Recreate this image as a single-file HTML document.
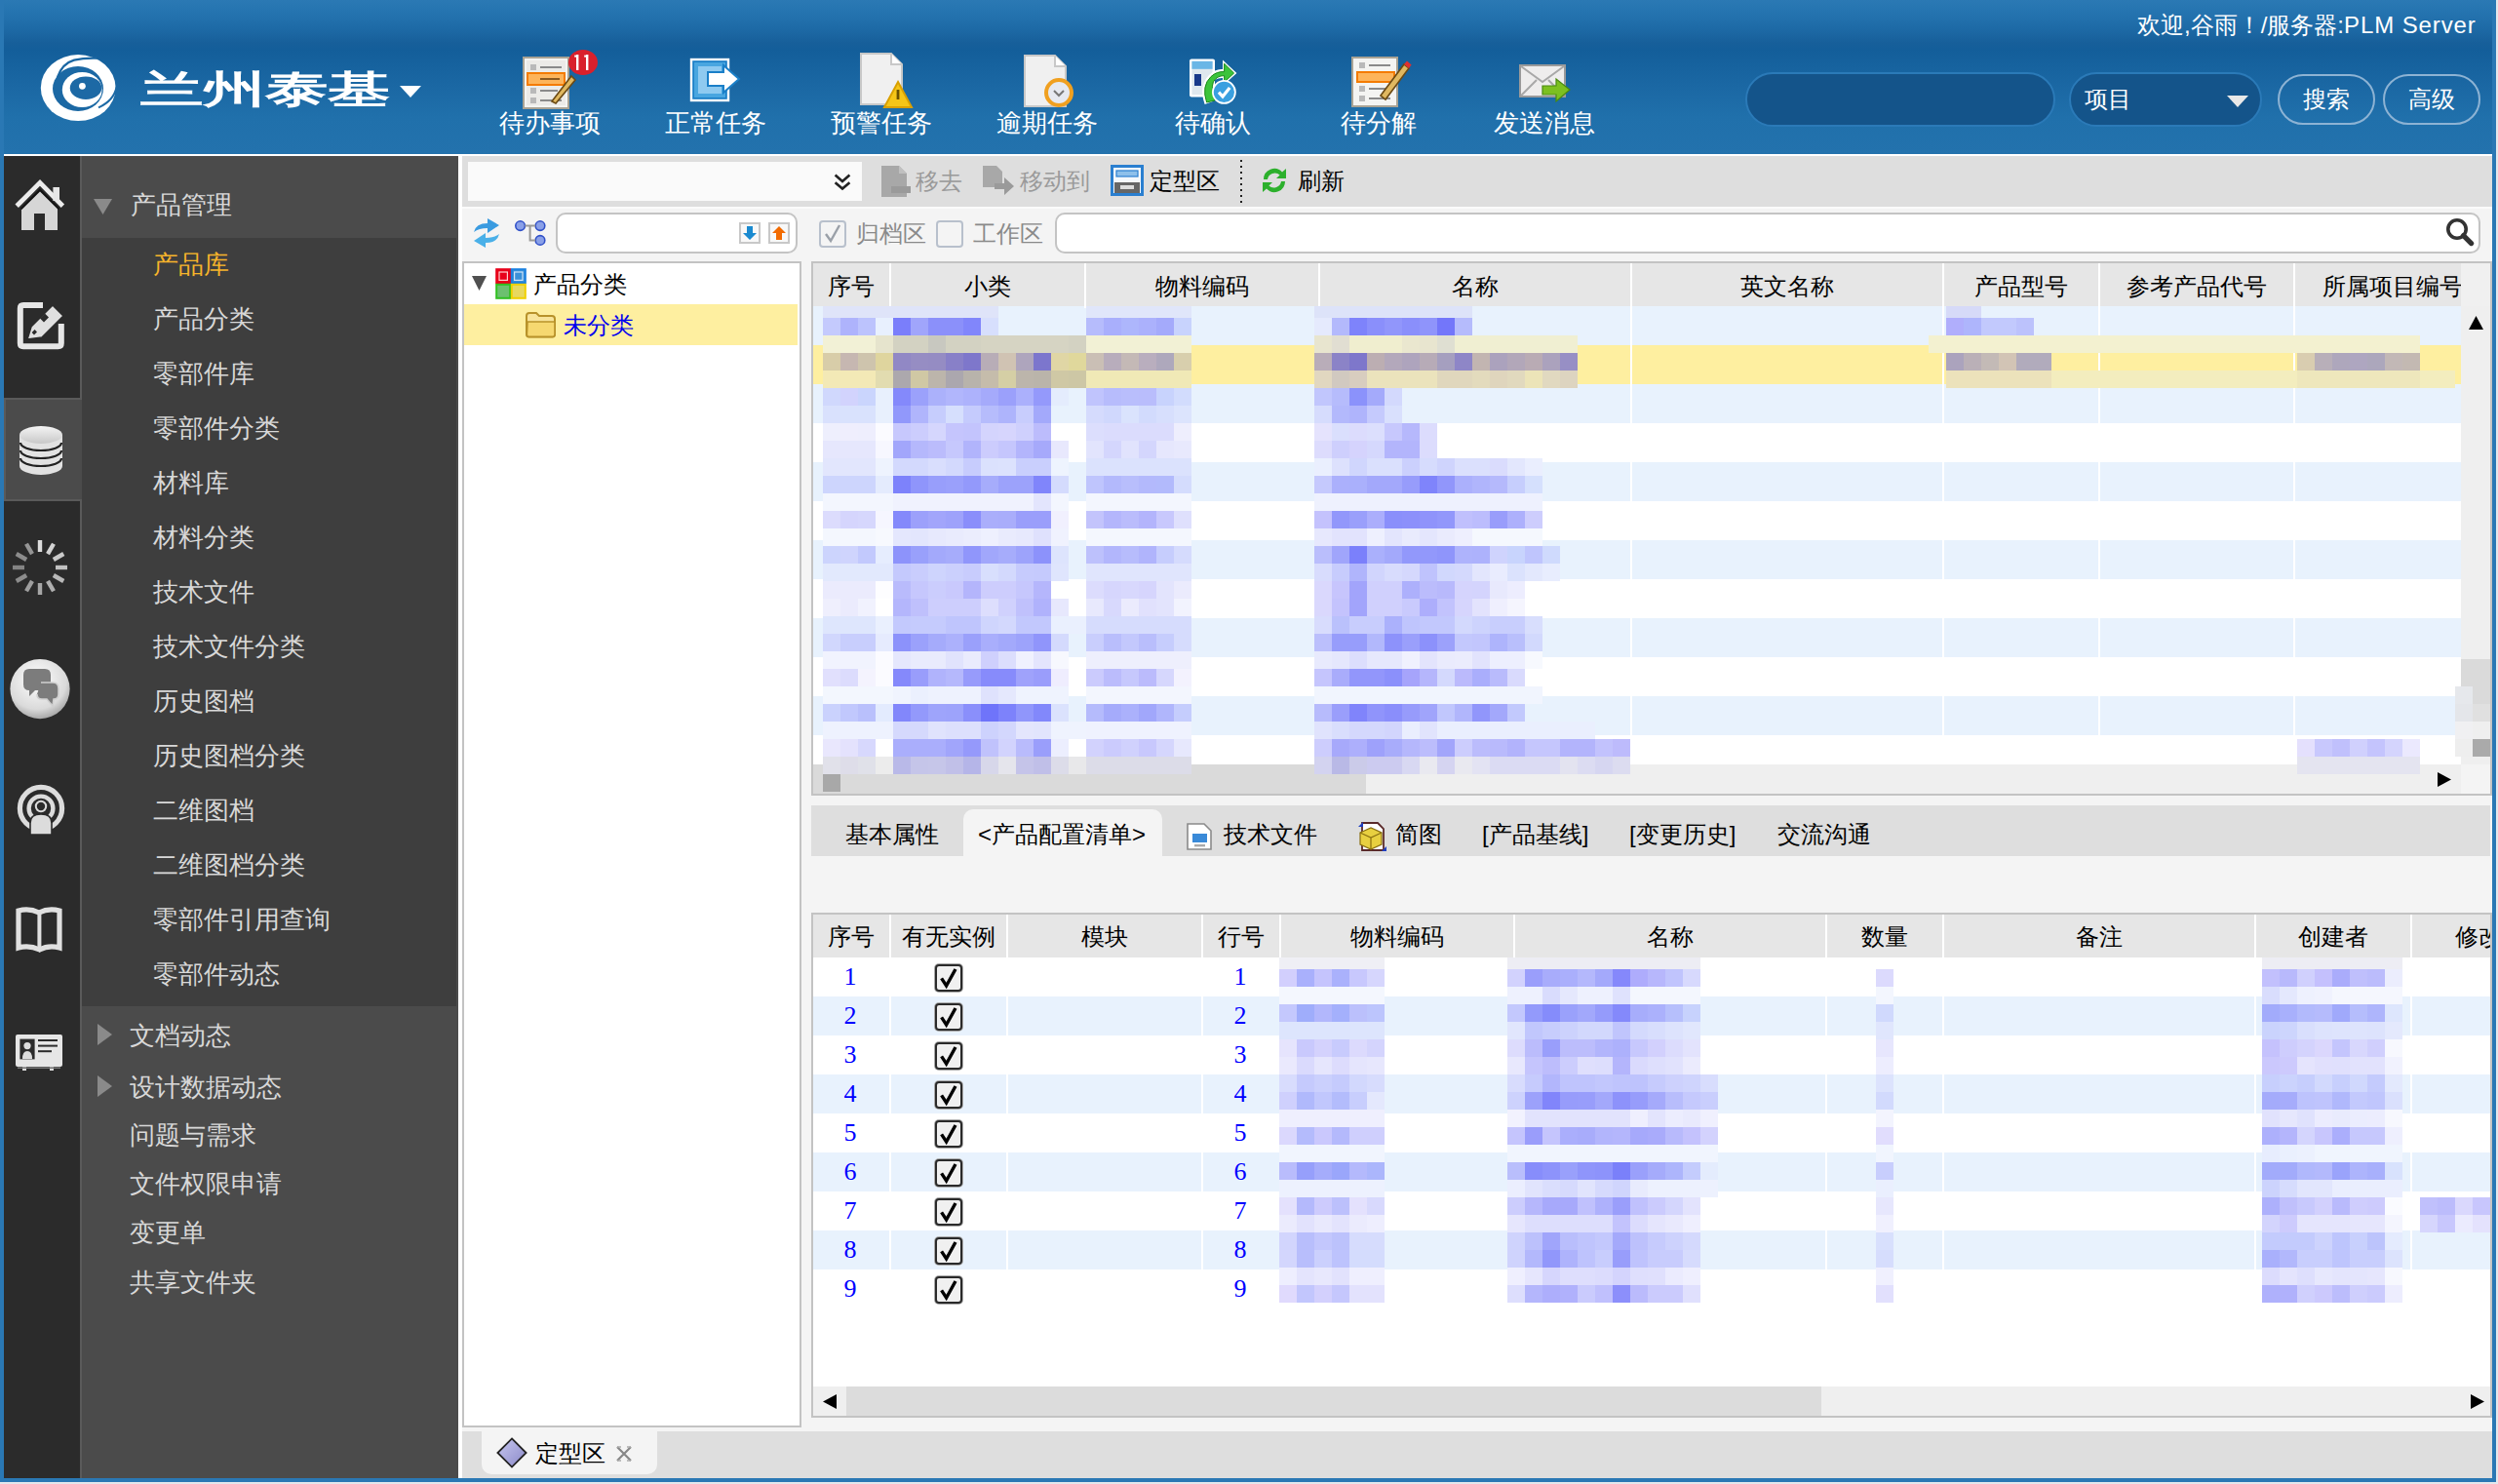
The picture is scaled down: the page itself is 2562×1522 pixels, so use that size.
<!DOCTYPE html>
<html><head><meta charset="utf-8">
<style>
html,body{margin:0;padding:0;width:2562px;height:1522px;overflow:hidden;background:#e8eef4;}
#r{position:absolute;left:0;top:0;width:1281px;height:761px;zoom:2;overflow:hidden;font-family:"Liberation Sans",sans-serif;font-size:12px;color:#000;}
.a{position:absolute;}
.t{position:absolute;white-space:nowrap;line-height:14px;}
.nv{color:#d8d8d8;font-size:13px;line-height:15px;margin-top:-0.5px}
.gy{color:#9a9a9a;}
.num{font-family:"Liberation Serif",serif;font-size:13px;color:#0000ff;line-height:14px;margin-left:-0.5px}
.cb{position:absolute;width:12px;height:12px;border:1px solid #2a2a2a;border-radius:2px;background:#f0f0f0;box-shadow:0 0 0 0.5px #aaa}
.hl{color:#fff;font-size:13px;line-height:15px;margin-top:-0.5px}
</style></head><body>
<div id="r">
<!-- window frame -->
<div class="a" style="left:0;top:0;width:1281px;height:761px;background:#e4e8ec"></div><div class="a" style="left:0;top:0;width:1280px;height:760px;background:#2a78b4"></div>
<!-- header gradient -->
<div class="a" id="hdr" style="left:2px;top:0;width:1276px;height:79px;background:linear-gradient(to bottom,#2b79b4 0px,#2574b0 6px,#1e6ba7 14px,#175f9a 22px,#135e9a 25.5px,#16629e 33px,#1b68a4 45px,#2070ab 60px,#2372ad 79px)"></div>
<!-- HEADER CONTENT -->
<div id="hc">
<!-- logo -->
<svg class="a" style="left:0;top:0" width="70" height="70" viewBox="0 0 70 70">
 <ellipse cx="40.1" cy="45.05" rx="19.2" ry="17" fill="#fff"/>
 <ellipse cx="40" cy="45.5" rx="13" ry="11.5" fill="#1b68a4"/>
 <ellipse cx="42.1" cy="46" rx="10.2" ry="9" fill="#fff"/>
 <ellipse cx="44" cy="45.1" rx="8.1" ry="5.9" fill="#1d69a5"/>
 <circle cx="42.2" cy="44.15" r="1.7" fill="#fff"/>
 <path d="M29.5 39.5 Q32 32.5 38 30.8 Q43 29.6 49.5 29.8" fill="none" stroke="#1a66a2" stroke-width="1.1"/>
 <path d="M59.8 44.5 Q58.5 51.5 50.5 55.2" fill="none" stroke="#1c69a5" stroke-width="1"/>
 <path d="M52 31.5 Q58 33 60.5 37" fill="none" stroke="#1b68a4" stroke-width="0"/>
</svg>
<div class="t" id="logotext" style="left:72px;top:34.5px;color:#fff;font-size:22px;line-height:26px;font-weight:bold;transform-origin:0 0;transform:scale(1.455,0.88);letter-spacing:0px">兰州泰基</div>
<svg class="a" style="left:205px;top:44px" width="11" height="6" viewBox="0 0 11 6"><path d="M0 0H11L5.5 6Z" fill="#fff"/></svg>

<!-- toolbar labels -->
<div class="t hl" style="left:256px;top:56px">待办事项</div>
<div class="t hl" style="left:341px;top:56px">正常任务</div>
<div class="t hl" style="left:426px;top:56px">预警任务</div>
<div class="t hl" style="left:511px;top:56px">逾期任务</div>
<div class="t hl" style="left:602.5px;top:56px">待确认</div>
<div class="t hl" style="left:687.5px;top:56px">待分解</div>
<div class="t hl" style="left:766px;top:56px">发送消息</div>

<!-- icon 1: todo list with badge -->
<svg class="a" style="left:266px;top:24px" width="42" height="34" viewBox="0 0 42 34">
 <rect x="2.5" y="5.5" width="23" height="26" fill="#f4f4f2" stroke="#a9a394"/>
 <rect x="4" y="7" width="20" height="23" fill="#ecebe8"/>
 <g fill="#b9b9b9"><rect x="6" y="9" width="3" height="3"/><rect x="6" y="21" width="3" height="3"/><rect x="6" y="26" width="3" height="3"/></g>
 <g fill="#8a8a8a"><rect x="11" y="10" width="11" height="1"/><rect x="11" y="22" width="9" height="1"/><rect x="11" y="27" width="11" height="1"/></g>
 <rect x="4.5" y="13.5" width="19" height="6" fill="#fdb45a" stroke="#f47b00"/>
 <rect x="11" y="16" width="10" height="1" fill="#8a5a20"/>
 <path d="M17 28 L27 15 L29 17 L19 29 Z" fill="#e0b860" stroke="#6b4a14" stroke-width="0.8"/>
 <ellipse cx="33" cy="8" rx="7.5" ry="6.5" fill="#d9202c"/>
 <g fill="#fff"><rect x="29.5" y="4" width="1.2" height="8"/><rect x="34.5" y="4" width="1.2" height="8"/><rect x="28.6" y="4.3" width="1" height="1"/><rect x="33.6" y="4.3" width="1" height="1"/></g>
</svg>
<!-- icon 2: normal task -->
<svg class="a" style="left:352px;top:28px" width="30" height="26" viewBox="0 0 30 26">
 <rect x="2.5" y="2.5" width="19" height="21" fill="#1a7fc8" stroke="#fff" stroke-width="1.2"/>
 <rect x="4" y="4" width="16" height="18" fill="#49a6e0"/>
 <rect x="6" y="6" width="12" height="14" fill="#8fcaf0"/>
 <path d="M11 9H19V5.5L27 12.5L19 19.5V16H11Z" fill="#fff" stroke="#1a7fc8" stroke-width="1"/>
</svg>
<!-- icon 3: warning doc -->
<svg class="a" style="left:440px;top:26px" width="30" height="30" viewBox="0 0 30 30">
 <path d="M1.5 1.5H17L22.5 7V27.5H1.5Z" fill="#f0f0f0" stroke="#c8c8c8"/>
 <path d="M17 1.5V7H22.5" fill="#ffffff" stroke="#c8c8c8"/>
 <path d="M20.5 16L27.5 29H13.5Z" fill="#f5c518" stroke="#d9a000"/>
 <rect x="19.8" y="20" width="1.4" height="5" fill="#6a5000"/>
</svg>
<!-- icon 4: overdue doc -->
<svg class="a" style="left:524px;top:27px" width="30" height="30" viewBox="0 0 30 30">
 <path d="M1.5 1.5H17L22.5 7V27.5H1.5Z" fill="#f0f0f0" stroke="#c8c8c8"/>
 <path d="M17 1.5V7H22.5" fill="#ffffff" stroke="#c8c8c8"/>
 <circle cx="19" cy="20.5" r="6.5" fill="#e6e9f0" stroke="#f0a020" stroke-width="2"/>
 <path d="M16.5 19.5L19 22L21.5 19.5" fill="none" stroke="#777" stroke-width="1"/>
</svg>
<!-- icon 5: confirm -->
<svg class="a" style="left:600px;top:25px" width="40" height="35" viewBox="600 25 40 35">
 <rect x="610" y="30.2" width="13" height="19.5" rx="1" fill="#fff"/>
 <rect x="611.2" y="31.4" width="10.6" height="17.2" fill="#dfe8ee"/>
 <rect x="611.2" y="31.4" width="10.6" height="4" fill="#6ab6e6"/>
 <rect x="612.5" y="38" width="3.5" height="6" fill="#1a3a8a"/>
 <path d="M617.8 53.5 Q614.5 44 620 38.5 Q623.5 35 627 35.5 L627 30.8 L634.2 37.5 L627 44 L627 40 Q623 39.8 621.2 43 Q619.8 47 622 52 Z" fill="#fff"/>
 <path d="M618.8 52.5 Q616 44 621 39.3 Q624 36.5 627.8 36.8 L627.8 32.6 L632.8 37.5 L627.8 42.2 L627.8 38.8 Q624 38.8 622.2 42 Q620.8 46 623 51.5 Z" fill="#3cc43a" stroke="#1a8a1a" stroke-width="0.5"/>
 <circle cx="627.7" cy="47.2" r="6.2" fill="#fff"/>
 <circle cx="627.7" cy="47.2" r="5.3" fill="#3aa0e0"/>
 <path d="M625 47.3 L627 49.5 L630.6 45" fill="none" stroke="#fff" stroke-width="1.6"/>
</svg>
<!-- icon 6: decompose -->
<svg class="a" style="left:692px;top:28px" width="32" height="28" viewBox="0 0 32 28">
 <rect x="1.5" y="1.5" width="23" height="25" fill="#f4f4f2" stroke="#a9a394"/>
 <g fill="#b9b9b9"><rect x="5" y="4" width="3" height="3"/><rect x="5" y="16" width="3" height="3"/><rect x="5" y="21" width="3" height="3"/></g>
 <g fill="#8a8a8a"><rect x="10" y="5" width="11" height="1"/><rect x="10" y="17" width="9" height="1"/><rect x="10" y="22" width="11" height="1"/></g>
 <rect x="4" y="9" width="19" height="5" fill="#fdb45a" stroke="#f47b00"/>
 <path d="M16 21 L28 5 L30.5 7 L18.5 23 Z" fill="#e0b860" stroke="#6b4a14" stroke-width="0.8"/>
 <path d="M28 5 L29.5 3.2 L31.8 5.2 L30.5 7Z" fill="#e03030"/>
</svg>
<!-- icon 7: send message -->
<svg class="a" style="left:778px;top:32px" width="30" height="24" viewBox="0 0 30 24">
 <rect x="1.5" y="1.5" width="23" height="16" fill="#eeeded" stroke="#9a9a9a"/>
 <path d="M2 2L13 10L24 2M2 17L10 9M24 17L16 9" fill="none" stroke="#a8a8a8" stroke-width="1"/>
 <path d="M13 12H20V8.5L27 14L20 20V16.5H13Z" fill="#7cc020" stroke="#4a8a10" stroke-width="0.6"/>
</svg>

<!-- welcome -->
<div class="t" id="welcome" style="left:1096px;top:5px;color:#fff;font-size:12px;line-height:16px">欢迎,谷雨！/服务器:<span style="letter-spacing:0.45px">PLM Server</span></div>
<!-- search -->
<div class="a" style="left:895px;top:37px;width:157px;height:26px;border:1px solid #2b7ab8;border-radius:14px;background:#14548a"></div>
<div class="a" style="left:1061px;top:37px;width:97px;height:26px;border:1px solid #2b7ab8;border-radius:14px;background:#14548a"></div>
<div class="t" style="left:1069px;top:44px;color:#fff;font-size:12px;line-height:14px">项目</div>
<svg class="a" style="left:1142px;top:49px" width="11" height="6" viewBox="0 0 11 6"><path d="M0 0H11L5.5 6Z" fill="#e8e8e8"/></svg>
<div class="a" style="left:1168px;top:38px;width:48px;height:24px;border:1px solid #8db3d4;border-radius:13px"></div>
<div class="a" style="left:1222px;top:38px;width:48px;height:24px;border:1px solid #8db3d4;border-radius:13px"></div>
<div class="t" style="left:1181px;top:44px;color:#fff;font-size:12px;line-height:14px">搜索</div>
<div class="t" style="left:1235px;top:44px;color:#fff;font-size:12px;line-height:14px">高级</div>
</div>
<div class="a" style="left:2px;top:79px;width:1276px;height:1px;background:#fff"></div>

<!-- icon column -->
<div class="a" style="left:2px;top:80px;width:39px;height:678px;background:#2b2b2b"></div>
<div class="a" style="left:41px;top:80px;width:1px;height:678px;background:#5a5a5a"></div>
<!-- nav panel -->
<div class="a" style="left:42px;top:80px;width:193px;height:678px;background:#4b4b4b"></div>
<div class="a" style="left:42px;top:122px;width:192px;height:394px;background:#3e3e3e"></div>
<div class="a" style="left:235px;top:80px;width:2px;height:678px;background:#fff"></div>

<!-- NAV -->
<svg class="a" style="left:48px;top:102px" width="10" height="8" viewBox="0 0 10 8"><path d="M0 0H9.5L4.75 8Z" fill="#8a8a8a"/></svg>
<div class="t nv" style="left:67px;top:98px">产品管理</div>
<div class="t nv" style="left:78.5px;top:128.5px;color:#f6b42b">产品库</div>
<div class="t nv" style="left:78.5px;top:156.5px;color:#d8d8d8">产品分类</div>
<div class="t nv" style="left:78.5px;top:184.5px;color:#d8d8d8">零部件库</div>
<div class="t nv" style="left:78.5px;top:212.5px;color:#d8d8d8">零部件分类</div>
<div class="t nv" style="left:78.5px;top:240.5px;color:#d8d8d8">材料库</div>
<div class="t nv" style="left:78.5px;top:268.5px;color:#d8d8d8">材料分类</div>
<div class="t nv" style="left:78.5px;top:296.5px;color:#d8d8d8">技术文件</div>
<div class="t nv" style="left:78.5px;top:324.5px;color:#d8d8d8">技术文件分类</div>
<div class="t nv" style="left:78.5px;top:352.5px;color:#d8d8d8">历史图档</div>
<div class="t nv" style="left:78.5px;top:380.5px;color:#d8d8d8">历史图档分类</div>
<div class="t nv" style="left:78.5px;top:408.5px;color:#d8d8d8">二维图档</div>
<div class="t nv" style="left:78.5px;top:436.5px;color:#d8d8d8">二维图档分类</div>
<div class="t nv" style="left:78.5px;top:464.5px;color:#d8d8d8">零部件引用查询</div>
<div class="t nv" style="left:78.5px;top:492.5px;color:#d8d8d8">零部件动态</div>
<svg class="a" style="left:50px;top:525px" width="8" height="11" viewBox="0 0 8 11"><path d="M0 0V11L7.5 5.5Z" fill="#8a8a8a"/></svg>
<div class="t nv" style="left:66.5px;top:524px">文档动态</div>
<svg class="a" style="left:50px;top:551.5px" width="8" height="11" viewBox="0 0 8 11"><path d="M0 0V11L7.5 5.5Z" fill="#8a8a8a"/></svg>
<div class="t nv" style="left:66.5px;top:550.5px">设计数据动态</div>
<div class="t nv" style="left:66.5px;top:575px">问题与需求</div>
<div class="t nv" style="left:66.5px;top:600px">文件权限申请</div>
<div class="t nv" style="left:66.5px;top:625px">变更单</div>
<div class="t nv" style="left:66.5px;top:650.5px">共享文件夹</div>
<div class="a" style="left:2px;top:204px;width:39px;height:51px;border:1px solid #5a5a5a;border-right:none;background:#4b4b4b"></div>
<div class="a" style="left:41px;top:205px;width:1px;height:51px;background:#4b4b4b"></div>
<svg class="a" style="left:0;top:80px" width="41" height="480" viewBox="0 80 41 480">
<defs>
 <linearGradient id="lg" x1="0" y1="0" x2="0" y2="1"><stop offset="0" stop-color="#f4f4f4"/><stop offset="1" stop-color="#c8c8c8"/></linearGradient>
 <radialGradient id="rg" cx="0.45" cy="0.35" r="0.7"><stop offset="0" stop-color="#ffffff"/><stop offset="0.7" stop-color="#dadada"/><stop offset="1" stop-color="#9a9a9a"/></radialGradient>
</defs>
<!-- home -->
<path d="M11 107 L20.5 97.5 L29.5 106.5 V118 H23 V109.5 H17.5 V118 H11 Z" fill="#d6d6d6"/>
<polyline points="8.6,105.6 20.5,93.7 32.2,105.6" fill="none" stroke="#ececec" stroke-width="2.4"/>
<polyline points="10.8,107.2 20.5,97.5 30.2,107.2" fill="none" stroke="#111" stroke-width="1"/>
<rect x="27.2" y="96" width="3.3" height="7" fill="#e6e6e6"/>
<!-- edit -->
<path d="M22 156.5 H12 Q10.4 156.5 10.4 158.1 V176 Q10.4 177.6 12 177.6 H29.8 Q31.4 177.6 31.4 176 V166" fill="none" stroke="#e6e6e6" stroke-width="3"/>
<path d="M14 174 L16 167.5 L27 156.5 L32.5 162 L21.5 173 Z" fill="#e0e0e0" stroke="#2b2b2b" stroke-width="0.8"/>
<path d="M20.5 163.2 L23 160.7 L25 162.7 L22.5 165.2Z" fill="#2b2b2b"/>
<path d="M16.3 170.5 L17.8 169 L19 170.2 L17.5 171.7Z" fill="#2b2b2b"/>
<!-- db -->
<path d="M10 223 V239 A11 4.5 0 0 0 32 239 V223 Z" fill="#e2e2e2"/>
<ellipse cx="21" cy="223" rx="11" ry="4.5" fill="url(#lg)"/>
<path d="M10.5 227 A10.5 4 0 0 0 31.5 227" fill="none" stroke="#222" stroke-width="1.1"/>
<path d="M10.5 231 A10.5 4 0 0 0 31.5 231" fill="none" stroke="#222" stroke-width="1.1"/>
<path d="M10.5 235 A10.5 4 0 0 0 31.5 235" fill="none" stroke="#222" stroke-width="1.1"/>
<!-- spinner -->
<line x1="20.50" y1="283.00" x2="20.50" y2="277.00" stroke="#dcdcdc" stroke-opacity="1" stroke-width="2.2"/><line x1="24.50" y1="284.07" x2="27.50" y2="278.88" stroke="#dcdcdc" stroke-opacity="0.95" stroke-width="2.2"/><line x1="27.43" y1="287.00" x2="32.62" y2="284.00" stroke="#dcdcdc" stroke-opacity="0.9" stroke-width="2.2"/><line x1="28.50" y1="291.00" x2="34.50" y2="291.00" stroke="#dcdcdc" stroke-opacity="0.85" stroke-width="2.2"/><line x1="27.43" y1="295.00" x2="32.62" y2="298.00" stroke="#dcdcdc" stroke-opacity="0.8" stroke-width="2.2"/><line x1="24.50" y1="297.93" x2="27.50" y2="303.12" stroke="#dcdcdc" stroke-opacity="0.75" stroke-width="2.2"/><line x1="20.50" y1="299.00" x2="20.50" y2="305.00" stroke="#dcdcdc" stroke-opacity="0.7" stroke-width="2.2"/><line x1="16.50" y1="297.93" x2="13.50" y2="303.12" stroke="#dcdcdc" stroke-opacity="0.65" stroke-width="2.2"/><line x1="13.57" y1="295.00" x2="8.38" y2="298.00" stroke="#dcdcdc" stroke-opacity="0.55" stroke-width="2.2"/><line x1="12.50" y1="291.00" x2="6.50" y2="291.00" stroke="#dcdcdc" stroke-opacity="0.5" stroke-width="2.2"/><line x1="13.57" y1="287.00" x2="8.38" y2="284.00" stroke="#dcdcdc" stroke-opacity="0.55" stroke-width="2.2"/><line x1="16.50" y1="284.07" x2="13.50" y2="278.88" stroke="#dcdcdc" stroke-opacity="0.6" stroke-width="2.2"/>
<!-- chat -->
<circle cx="20.5" cy="353.3" r="15.3" fill="url(#rg)"/>
<path d="M12 346 Q12 343 15 343 H23 Q26 343 26 346 V351 Q26 354 23 354 H18 L15 357 V354 Q12 354 12 351Z" fill="#7c7c7c"/>
<path d="M21 350 H27 Q30 350 30 353 V356 Q30 358.5 27.5 358.5 L27 362 L24 358.5 H21.5 Q19 358.5 19 356" fill="#7c7c7c" stroke="#cfcfcf" stroke-width="0.8"/>
<!-- radio -->
<circle cx="21" cy="414.5" r="10.8" fill="none" stroke="#dcdcdc" stroke-width="2.6"/>
<circle cx="21" cy="414.5" r="6.2" fill="none" stroke="#dcdcdc" stroke-width="2.2"/>
<circle cx="21" cy="413.5" r="2.6" fill="#2b2b2b" stroke="#dcdcdc" stroke-width="1"/>
<path d="M15.5 428 V422 Q15.5 417.5 21 417.5 Q26.5 417.5 26.5 422 V428Z" fill="#dcdcdc" stroke="#2b2b2b" stroke-width="0.8"/>
<!-- book -->
<path d="M9.5 467 Q15 465.5 20 468 Q25 465.5 30.5 467 V486 Q25 484.5 20.3 487 Q15 484.5 9.5 486 Z" fill="none" stroke="#e0e0e0" stroke-width="2.6"/>
<line x1="20.2" y1="468" x2="20.2" y2="487" stroke="#e0e0e0" stroke-width="2"/>
<!-- id card -->
<rect x="8" y="530.5" width="24" height="16.5" rx="1" fill="#e6e6e6"/>
<rect x="10.2" y="532.8" width="7.6" height="10.4" fill="#2b2b2b"/>
<circle cx="14" cy="536.3" r="1.8" fill="#dcdcdc"/>
<path d="M11.5 543 Q11.5 539 14 539 Q16.5 539 16.5 543Z" fill="#dcdcdc"/>
<g fill="#2b2b2b"><rect x="19.5" y="533" width="10" height="1"/><rect x="19.5" y="535.8" width="10" height="1"/><rect x="19.5" y="538.6" width="7" height="1"/></g>
<g fill="#dcdcdc"><rect x="11.5" y="547" width="2" height="2"/><rect x="25.5" y="547" width="2" height="2"/><rect x="9" y="547.2" width="22" height="0.8" fill="#777"/></g>
</svg>
<!-- content -->
<div class="a" id="content" style="left:237px;top:80px;width:1041px;height:678px;background:#f4f4f4"></div>
<div class="a" style="left:237px;top:80px;width:1041px;height:26px;background:#dedede"></div>
<div class="a" style="left:237px;top:106px;width:1041px;height:1px;background:#fbfbfb"></div>
<div class="a" style="left:240px;top:83px;width:202px;height:20px;background:#fafafa"></div>
<svg class="a" style="left:427.5px;top:89px" width="9" height="9" viewBox="0 0 9 9"><path d="M0.8 0.8L4.5 4L8.2 0.8M0.8 4.6L4.5 7.8L8.2 4.6" fill="none" stroke="#222" stroke-width="1.3"/></svg>
<svg class="a" style="left:451px;top:84px" width="17" height="18" viewBox="0 0 17 18"><path d="M1 1H10L14 5V17H1Z" fill="#a8a8a8"/><path d="M10 1V5H14" fill="#c0c0c0"/><rect x="6" y="11.5" width="10" height="3.5" fill="#9a9a9a"/></svg>
<div class="t gy" style="left:469.5px;top:86px">移去</div>
<svg class="a" style="left:503px;top:84px" width="18" height="18" viewBox="0 0 18 18"><path d="M1 1H8L11 4V12H1Z" fill="#a8a8a8"/><path d="M7 10H12V7L17 11.5L12 16V13H7Z" fill="#9a9a9a"/></svg>
<div class="t gy" style="left:523px;top:86px">移动到</div>
<svg class="a" style="left:569.5px;top:84.5px" width="17" height="16" viewBox="0 0 17 16"><rect x="0.75" y="0.75" width="15.5" height="14.5" fill="#f4f8fc" stroke="#2a7fd0" stroke-width="1.5"/><rect x="3" y="3" width="11" height="3" fill="#8ec0ea" stroke="#2a7fd0" stroke-width="0.6"/><rect x="2" y="9" width="13" height="5.5" fill="#666"/><rect x="5" y="10.5" width="7" height="2" fill="#ddd"/></svg>
<div class="t" style="left:589.5px;top:86px">定型区</div>
<div class="a" style="left:636px;top:82px;width:1px;height:22px;background:repeating-linear-gradient(to bottom,#222 0 1px,transparent 1px 3px)"></div>
<svg class="a" style="left:646px;top:85px" width="15" height="15" viewBox="0 0 15 15"><path d="M2 7 A5.5 5.5 0 0 1 11.5 3.2 L13.5 1.5 V6.5 H8.5 L10.3 4.7 A3.8 3.8 0 0 0 4 7Z" fill="#2cb02c"/><path d="M13 8 A5.5 5.5 0 0 1 3.5 11.8 L1.5 13.5 V8.5 H6.5 L4.7 10.3 A3.8 3.8 0 0 0 11 8Z" fill="#2cb02c"/></svg>
<div class="t" style="left:665.5px;top:86px">刷新</div>
<svg class="a" style="left:241px;top:111px" width="17" height="17" viewBox="0 0 17 17"><path d="M2 8 Q3 3.5 9 3.5 V1 L15 4.5 L9 8.5 V6 Q4.5 6 2 8Z" fill="#3a9be0"/><path d="M15 9 Q14 13.5 8 13.5 V16 L2 12.5 L8 8.5 V11 Q12.5 11 15 9Z" fill="#4ab0e8"/></svg>
<svg class="a" style="left:264px;top:113px" width="17" height="14" viewBox="0 0 17 14"><circle cx="2.8" cy="2.8" r="2.4" fill="#8aa0e8" stroke="#3050c8" stroke-width="0.8"/><circle cx="13" cy="2.8" r="2.4" fill="#8aa0e8" stroke="#3050c8" stroke-width="0.8"/><circle cx="13" cy="10.2" r="2.4" fill="#8aa0e8" stroke="#3050c8" stroke-width="0.8"/><path d="M5.2 2.8H10.6M7.8 2.8V10.2H10.6" fill="none" stroke="#999" stroke-width="1"/></svg>
<div class="a" style="left:285px;top:109px;width:122px;height:19px;border:1px solid #c4c4c4;border-radius:5px;background:#fff"></div>
<div class="a" style="left:379px;top:114px;width:9px;height:9px;border:1px solid #c8c8c8;background:#f8f8f8"></div>
<svg class="a" style="left:380px;top:115px" width="9" height="9" viewBox="0 0 9 9"><path d="M3 1H6V4.5H8L4.5 8L1 4.5H3Z" fill="#1a8ad0"/></svg>
<div class="a" style="left:394px;top:114px;width:9px;height:9px;border:1px solid #c8c8c8;background:#f8f8f8"></div>
<svg class="a" style="left:395px;top:115px" width="9" height="9" viewBox="0 0 9 9"><path d="M3 8H6V4.5H8L4.5 1L1 4.5H3Z" fill="#f26a00"/></svg>
<div class="a" style="left:420px;top:113px;width:12px;height:12px;border:1px solid #b8c0cc;border-radius:2px;background:#f4f4f4"></div>
<svg class="a" style="left:421px;top:114px" width="12" height="12" viewBox="0 0 12 12"><path d="M2.5 6L5 9.5L9.5 1.5" fill="none" stroke="#9aa0a8" stroke-width="1.2"/></svg>
<div class="t gy" style="left:439px;top:113px;color:#8a8a8a">归档区</div>
<div class="a" style="left:480px;top:113px;width:12px;height:12px;border:1px solid #b8c0cc;border-radius:2px;background:#f4f4f4"></div>
<div class="t gy" style="left:499px;top:113px;color:#8a8a8a">工作区</div>
<div class="a" style="left:541px;top:109px;width:729px;height:19px;border:1px solid #c4c4c4;border-radius:5px;background:#fff"></div>
<svg class="a" style="left:1254px;top:111.5px" width="15" height="15" viewBox="0 0 15 15"><circle cx="6" cy="6" r="4.6" fill="#fff" stroke="#333" stroke-width="1.8"/><path d="M9.3 9.3L13.3 13.3" stroke="#333" stroke-width="2.6" stroke-linecap="round"/></svg>
<div class="a" style="left:237px;top:134px;width:172px;height:596px;border:1px solid #c3c3c3;background:#fff"></div>
<svg class="a" style="left:242px;top:141.5px" width="8" height="8" viewBox="0 0 8 8"><path d="M0 0H7.5L3.75 7.5Z" fill="#505050"/></svg>
<svg class="a" style="left:254px;top:137.5px" width="16" height="16" viewBox="0 0 16 16"><rect x="0.6" y="0.6" width="7" height="7" fill="#e8001a" stroke="#e8001a"/><rect x="2" y="2" width="4.2" height="4.2" fill="#e8001a" stroke="#ffd0d0" stroke-width="0.6"/><rect x="8.4" y="0.6" width="7" height="7" fill="#3a90d8" stroke="#1a80e0"/><rect x="9.8" y="2" width="4.2" height="4.2" fill="#3a90d8" stroke="#d0e4f8" stroke-width="0.6"/><rect x="0.6" y="8.4" width="7" height="7" fill="#6cc070" stroke="#30c020"/><rect x="8.4" y="8.4" width="7" height="7" fill="#e8d860" stroke="#f0d000"/></svg>
<div class="t" style="left:273.5px;top:139px">产品分类</div>
<div class="a" style="left:238px;top:156px;width:171px;height:21px;background:#feefa0"></div>
<svg class="a" style="left:269px;top:159.5px" width="17" height="14" viewBox="0 0 17 14"><path d="M1 2.5Q1 1 2.5 1H6L7.5 2.5H14Q15.5 2.5 15.5 4V12Q15.5 13.2 14.3 13.2H2.2Q1 13.2 1 12Z" fill="#f8e49a" stroke="#b8922a" stroke-width="1"/><path d="M1.5 5.5H15.5V12Q15.5 13.2 14.3 13.2H2.2Q1.2 13.2 1.2 12Z" fill="#f6d870" stroke="#b8922a" stroke-width="0.8"/></svg>
<div class="t" style="left:289px;top:160px;color:#0000ee">未分类</div>
<div class="a" style="left:416px;top:134px;width:860px;height:272px;border:1px solid #c3c3c3;background:#fff"></div>
<div class="a" style="left:417px;top:135px;width:845px;height:22px;background:#e6e6e6"></div>
<div class="a" style="left:1262px;top:135px;width:15px;height:22px;background:#f0f0f0"></div>
<div class="a" style="left:417px;top:157px;width:845px;height:20px;background:#e8f2fd"></div>
<div class="a" style="left:417px;top:177px;width:845px;height:20px;background:#feefa0"></div>
<div class="a" style="left:417px;top:197px;width:845px;height:20px;background:#e8f2fd"></div>
<div class="a" style="left:417px;top:217px;width:845px;height:20px;background:#ffffff"></div>
<div class="a" style="left:417px;top:237px;width:845px;height:20px;background:#e8f2fd"></div>
<div class="a" style="left:417px;top:257px;width:845px;height:20px;background:#ffffff"></div>
<div class="a" style="left:417px;top:277px;width:845px;height:20px;background:#e8f2fd"></div>
<div class="a" style="left:417px;top:297px;width:845px;height:20px;background:#ffffff"></div>
<div class="a" style="left:417px;top:317px;width:845px;height:20px;background:#e8f2fd"></div>
<div class="a" style="left:417px;top:337px;width:845px;height:20px;background:#ffffff"></div>
<div class="a" style="left:417px;top:357px;width:845px;height:20px;background:#e8f2fd"></div>
<div class="a" style="left:417px;top:377px;width:845px;height:15px;background:#ffffff"></div>
<div class="a" style="left:456px;top:135px;width:1px;height:23px;background:#fff"></div>
<div class="a" style="left:556px;top:135px;width:1px;height:23px;background:#fff"></div>
<div class="a" style="left:676px;top:135px;width:1px;height:23px;background:#fff"></div>
<div class="a" style="left:836px;top:135px;width:1px;height:257px;background:#fff"></div>
<div class="a" style="left:996px;top:135px;width:1px;height:257px;background:#fff"></div>
<div class="a" style="left:1076px;top:135px;width:1px;height:257px;background:#fff"></div>
<div class="a" style="left:1176px;top:135px;width:1px;height:257px;background:#fff"></div>
<div class="a" style="left:417px;top:135px;width:845px;height:22px;overflow:hidden">
<div class="t" style="left:0px;width:39px;top:5px;text-align:center">序号</div>
<div class="t" style="left:40px;width:99px;top:5px;text-align:center">小类</div>
<div class="t" style="left:140px;width:119px;top:5px;text-align:center">物料编码</div>
<div class="t" style="left:260px;width:159px;top:5px;text-align:center">名称</div>
<div class="t" style="left:420px;width:159px;top:5px;text-align:center">英文名称</div>
<div class="t" style="left:580px;width:79px;top:5px;text-align:center">产品型号</div>
<div class="t" style="left:660px;width:99px;top:5px;text-align:center">参考产品代号</div>
<div class="t" style="left:760px;width:100px;top:5px;text-align:center">所属项目编号</div>
</div>
<!-- MOSAIC1 -->
<div class="a" style="left:1262px;top:157px;width:15px;height:235px;background:#efefef"></div>
<div class="a" style="left:1262px;top:338px;width:15px;height:50px;background:#dadada"></div>
<svg class="a" style="left:1266px;top:162px" width="8" height="7" viewBox="0 0 8 7"><path d="M0 7H7.5L3.75 0Z" fill="#000"/></svg>
<div class="a" style="left:417px;top:392px;width:845px;height:15px;background:#efefef"></div>
<div class="a" style="left:417px;top:392px;width:283.5px;height:15px;background:#dadada"></div>
<div class="a" style="left:1262px;top:392px;width:15px;height:15px;background:#f4f4f4"></div>
<svg class="a" style="left:1250px;top:396px" width="7" height="8" viewBox="0 0 7 8"><path d="M0 0V7.5L7 3.75Z" fill="#000"/></svg>
<div class="a" style="left:416px;top:413px;width:861px;height:26px;background:#dedede"></div>
<div class="a" style="left:494px;top:415px;width:102px;height:24px;background:#f4f4f4;border-radius:5px 5px 0 0"></div>
<div class="t" style="left:433.5px;top:421px">基本属性</div>
<div class="t" style="left:501.5px;top:421px">&lt;产品配置清单&gt;</div>
<svg class="a" style="left:608px;top:421.5px" width="15" height="15" viewBox="0 0 15 15"><path d="M1 1H9.5L13 4.5V14H1Z" fill="#fff" stroke="#8a8a8a" stroke-width="0.8"/><rect x="3.5" y="6" width="7.5" height="4.5" fill="#3a8ad8"/><rect x="4.5" y="11.5" width="5.5" height="1.2" fill="#aaa"/></svg>
<div class="t" style="left:627.5px;top:421px">技术文件</div>
<svg class="a" style="left:695.5px;top:421px" width="17" height="16" viewBox="0 0 17 16"><path d="M3 1H11L14 4V15H3Z" fill="#fff" stroke="#5a2a2a" stroke-width="0.9"/><path d="M2 6L7.5 3.5L13 6V12L7.5 14.5L2 12Z" fill="#e8d040" stroke="#8a7010" stroke-width="0.6"/><path d="M2 6L7.5 8.5L13 6M7.5 8.5V14.5" fill="none" stroke="#8a7010" stroke-width="0.6"/><path d="M1 3L3.5 0.5V3Z" fill="#2040c0"/><path d="M13 15.5L15.5 13V15.5Z" fill="#2040c0"/></svg>
<div class="t" style="left:715.5px;top:421px">简图</div>
<div class="t" style="left:760px;top:421px">[产品基线]</div>
<div class="t" style="left:835.5px;top:421px">[变更历史]</div>
<div class="t" style="left:911.5px;top:421px">交流沟通</div>
<div class="a" style="left:416px;top:468px;width:860px;height:257px;border:1px solid #c3c3c3;background:#fff"></div>
<div class="a" style="left:417px;top:469px;width:860px;height:22px;background:#e6e6e6"></div>
<div class="a" style="left:417px;top:511px;width:860px;height:20px;background:#e8f2fd"></div>
<div class="a" style="left:417px;top:551px;width:860px;height:20px;background:#e8f2fd"></div>
<div class="a" style="left:417px;top:591px;width:860px;height:20px;background:#e8f2fd"></div>
<div class="a" style="left:417px;top:631px;width:860px;height:20px;background:#e8f2fd"></div>
<div class="a" style="left:456px;top:469px;width:1px;height:202px;background:#fff"></div>
<div class="a" style="left:516px;top:469px;width:1px;height:202px;background:#fff"></div>
<div class="a" style="left:616px;top:469px;width:1px;height:202px;background:#fff"></div>
<div class="a" style="left:656px;top:469px;width:1px;height:202px;background:#fff"></div>
<div class="a" style="left:776px;top:469px;width:1px;height:202px;background:#fff"></div>
<div class="a" style="left:936px;top:469px;width:1px;height:202px;background:#fff"></div>
<div class="a" style="left:996px;top:469px;width:1px;height:202px;background:#fff"></div>
<div class="a" style="left:1156px;top:469px;width:1px;height:202px;background:#fff"></div>
<div class="a" style="left:1236px;top:469px;width:1px;height:202px;background:#fff"></div>
<div class="a" style="left:417px;top:468.5px;width:860px;height:22.5px;overflow:hidden">
<div class="t" style="left:0px;width:39px;top:5px;text-align:center">序号</div>
<div class="t" style="left:40px;width:59px;top:5px;text-align:center">有无实例</div>
<div class="t" style="left:100px;width:99px;top:5px;text-align:center">模块</div>
<div class="t" style="left:200px;width:39px;top:5px;text-align:center">行号</div>
<div class="t" style="left:240px;width:119px;top:5px;text-align:center">物料编码</div>
<div class="t" style="left:360px;width:159px;top:5px;text-align:center">名称</div>
<div class="t" style="left:520px;width:59px;top:5px;text-align:center">数量</div>
<div class="t" style="left:580px;width:159px;top:5px;text-align:center">备注</div>
<div class="t" style="left:740px;width:79px;top:5px;text-align:center">创建者</div>
<div class="t" style="left:820px;width:80px;top:5px;text-align:center">修改者</div>
</div>
<div class="t num" style="left:417px;width:39px;top:494px;text-align:center">1</div>
<div class="t num" style="left:617px;width:39px;top:494px;text-align:center">1</div>
<div class="cb" style="left:479.5px;top:494.5px"><svg width="14" height="14" viewBox="0 0 14 14" style="position:absolute;left:-1px;top:-1px"><path d="M3.3 7.2L5.8 11L10.5 2.5" fill="none" stroke="#000" stroke-width="1.7"/></svg></div>
<div class="t num" style="left:417px;width:39px;top:514px;text-align:center">2</div>
<div class="t num" style="left:617px;width:39px;top:514px;text-align:center">2</div>
<div class="cb" style="left:479.5px;top:514.5px"><svg width="14" height="14" viewBox="0 0 14 14" style="position:absolute;left:-1px;top:-1px"><path d="M3.3 7.2L5.8 11L10.5 2.5" fill="none" stroke="#000" stroke-width="1.7"/></svg></div>
<div class="t num" style="left:417px;width:39px;top:534px;text-align:center">3</div>
<div class="t num" style="left:617px;width:39px;top:534px;text-align:center">3</div>
<div class="cb" style="left:479.5px;top:534.5px"><svg width="14" height="14" viewBox="0 0 14 14" style="position:absolute;left:-1px;top:-1px"><path d="M3.3 7.2L5.8 11L10.5 2.5" fill="none" stroke="#000" stroke-width="1.7"/></svg></div>
<div class="t num" style="left:417px;width:39px;top:554px;text-align:center">4</div>
<div class="t num" style="left:617px;width:39px;top:554px;text-align:center">4</div>
<div class="cb" style="left:479.5px;top:554.5px"><svg width="14" height="14" viewBox="0 0 14 14" style="position:absolute;left:-1px;top:-1px"><path d="M3.3 7.2L5.8 11L10.5 2.5" fill="none" stroke="#000" stroke-width="1.7"/></svg></div>
<div class="t num" style="left:417px;width:39px;top:574px;text-align:center">5</div>
<div class="t num" style="left:617px;width:39px;top:574px;text-align:center">5</div>
<div class="cb" style="left:479.5px;top:574.5px"><svg width="14" height="14" viewBox="0 0 14 14" style="position:absolute;left:-1px;top:-1px"><path d="M3.3 7.2L5.8 11L10.5 2.5" fill="none" stroke="#000" stroke-width="1.7"/></svg></div>
<div class="t num" style="left:417px;width:39px;top:594px;text-align:center">6</div>
<div class="t num" style="left:617px;width:39px;top:594px;text-align:center">6</div>
<div class="cb" style="left:479.5px;top:594.5px"><svg width="14" height="14" viewBox="0 0 14 14" style="position:absolute;left:-1px;top:-1px"><path d="M3.3 7.2L5.8 11L10.5 2.5" fill="none" stroke="#000" stroke-width="1.7"/></svg></div>
<div class="t num" style="left:417px;width:39px;top:614px;text-align:center">7</div>
<div class="t num" style="left:617px;width:39px;top:614px;text-align:center">7</div>
<div class="cb" style="left:479.5px;top:614.5px"><svg width="14" height="14" viewBox="0 0 14 14" style="position:absolute;left:-1px;top:-1px"><path d="M3.3 7.2L5.8 11L10.5 2.5" fill="none" stroke="#000" stroke-width="1.7"/></svg></div>
<div class="t num" style="left:417px;width:39px;top:634px;text-align:center">8</div>
<div class="t num" style="left:617px;width:39px;top:634px;text-align:center">8</div>
<div class="cb" style="left:479.5px;top:634.5px"><svg width="14" height="14" viewBox="0 0 14 14" style="position:absolute;left:-1px;top:-1px"><path d="M3.3 7.2L5.8 11L10.5 2.5" fill="none" stroke="#000" stroke-width="1.7"/></svg></div>
<div class="t num" style="left:417px;width:39px;top:654px;text-align:center">9</div>
<div class="t num" style="left:617px;width:39px;top:654px;text-align:center">9</div>
<div class="cb" style="left:479.5px;top:654.5px"><svg width="14" height="14" viewBox="0 0 14 14" style="position:absolute;left:-1px;top:-1px"><path d="M3.3 7.2L5.8 11L10.5 2.5" fill="none" stroke="#000" stroke-width="1.7"/></svg></div>
<!-- MOSAIC2 -->
<div class="a" style="left:417px;top:711px;width:860px;height:15px;background:#efefef"></div>
<div class="a" style="left:434px;top:711px;width:500px;height:15px;background:#dcdcdc"></div>
<svg class="a" style="left:422px;top:715px" width="7" height="7.5" viewBox="0 0 7 7.5"><path d="M7 0V7.5L0 3.75Z" fill="#000"/></svg>
<svg class="a" style="left:1267px;top:715px" width="7" height="7.5" viewBox="0 0 7 7.5"><path d="M0 0V7.5L7 3.75Z" fill="#000"/></svg>
<div class="a" style="left:237px;top:734px;width:1041px;height:24px;background:#dedede"></div>
<div class="a" style="left:247px;top:734px;width:90px;height:22px;background:#f4f4f4;border-radius:0 0 5px 5px"></div>
<svg class="a" style="left:254.5px;top:737px" width="16" height="16" viewBox="0 0 16 16"><defs><linearGradient id="dg" x1="0" y1="0" x2="1" y2="1"><stop offset="0" stop-color="#c8c8f0"/><stop offset="1" stop-color="#8a88c8"/></linearGradient></defs><path d="M8 0.7L15.3 8L8 15.3L0.7 8Z" fill="url(#dg)" stroke="#222" stroke-width="0.9"/></svg>
<div class="t" style="left:274.5px;top:738.5px">定型区</div>
<svg class="a" style="left:315.5px;top:741px" width="9" height="9" viewBox="0 0 9 9"><path d="M1 1L8 8M8 1L1 8" stroke="#888" stroke-width="1.1"/><path d="M1 1H3M6 1H8M1 8H3M6 8H8" stroke="#aaa" stroke-width="0.8"/></svg>
</div>
<svg id="mos" style="position:absolute;left:0;top:0" width="2562" height="1522" viewBox="0 0 2562 1522" shape-rendering="crispEdges"><defs><clipPath id="cu"><rect x="834" y="314" width="1720" height="500"/></clipPath><clipPath id="cl"><rect x="834" y="982" width="1720" height="440"/></clipPath></defs><g clip-path="url(#cu)"><rect x="844" y="314" width="180" height="12" fill="#dfe4f9"/><rect x="1114" y="314" width="108" height="12" fill="#e0e6fa"/><rect x="1348" y="314" width="162" height="12" fill="#dde3f9"/><rect x="1996" y="314" width="36" height="12" fill="#d6daf8"/><rect x="844" y="326" width="18" height="18" fill="#c4cafd"/><rect x="862" y="326" width="18" height="18" fill="#aeb3fc"/><rect x="880" y="326" width="18" height="18" fill="#bcc3fd"/><rect x="898" y="326" width="18" height="18" fill="#e8f0fe"/><rect x="916" y="326" width="18" height="18" fill="#7a7efb"/><rect x="934" y="326" width="18" height="18" fill="#a0a5fb"/><rect x="952" y="326" width="36" height="18" fill="#8b90fa"/><rect x="988" y="326" width="18" height="18" fill="#8186fb"/><rect x="1006" y="326" width="18" height="18" fill="#d7dffd"/><rect x="1114" y="326" width="18" height="18" fill="#b6bcfc"/><rect x="1132" y="326" width="18" height="18" fill="#a9affc"/><rect x="1150" y="326" width="18" height="18" fill="#adb6fc"/><rect x="1168" y="326" width="18" height="18" fill="#abb1fc"/><rect x="1186" y="326" width="18" height="18" fill="#a4aafb"/><rect x="1204" y="326" width="18" height="18" fill="#c8d3fd"/><rect x="1348" y="326" width="18" height="18" fill="#e5eafd"/><rect x="1366" y="326" width="18" height="18" fill="#b3b9fc"/><rect x="1384" y="326" width="18" height="18" fill="#7e83fb"/><rect x="1402" y="326" width="18" height="18" fill="#8a8ffb"/><rect x="1420" y="326" width="18" height="18" fill="#9196fb"/><rect x="1438" y="326" width="18" height="18" fill="#8a8ffb"/><rect x="1456" y="326" width="18" height="18" fill="#8f94fb"/><rect x="1474" y="326" width="18" height="18" fill="#7376fa"/><rect x="1492" y="326" width="18" height="18" fill="#b5bbfc"/><rect x="1996" y="326" width="18" height="18" fill="#b0aefc"/><rect x="2014" y="326" width="18" height="18" fill="#aeb5fc"/><rect x="2032" y="326" width="36" height="18" fill="#c2c9fd"/><rect x="2068" y="326" width="18" height="18" fill="#bcc2fc"/><rect x="844" y="344" width="54" height="18" fill="#f2f1d6"/><rect x="898" y="344" width="18" height="18" fill="#e6e4cd"/><rect x="916" y="344" width="36" height="18" fill="#d3d2c2"/><rect x="952" y="344" width="18" height="18" fill="#c8c8c0"/><rect x="970" y="344" width="36" height="18" fill="#d3d2c2"/><rect x="1006" y="344" width="90" height="18" fill="#d6d4c3"/><rect x="1096" y="344" width="18" height="18" fill="#d3d2c2"/><rect x="1114" y="344" width="108" height="18" fill="#f2f1d5"/><rect x="1348" y="344" width="18" height="18" fill="#e8e5cf"/><rect x="1366" y="344" width="18" height="18" fill="#e1ded2"/><rect x="1384" y="344" width="54" height="18" fill="#f0eecf"/><rect x="1438" y="344" width="18" height="18" fill="#eae7cf"/><rect x="1456" y="344" width="18" height="18" fill="#e8e5cf"/><rect x="1474" y="344" width="18" height="18" fill="#dfdfd2"/><rect x="1492" y="344" width="126" height="18" fill="#f0efd2"/><rect x="1978" y="344" width="504" height="18" fill="#f3f1d0"/><rect x="844" y="362" width="18" height="18" fill="#d8cda9"/><rect x="862" y="362" width="18" height="18" fill="#c6b7b1"/><rect x="880" y="362" width="18" height="18" fill="#cec4ad"/><rect x="898" y="362" width="18" height="18" fill="#dfd59e"/><rect x="916" y="362" width="18" height="18" fill="#9188c5"/><rect x="934" y="362" width="18" height="18" fill="#968dc3"/><rect x="952" y="362" width="18" height="18" fill="#958cc3"/><rect x="970" y="362" width="18" height="18" fill="#8880c8"/><rect x="988" y="362" width="18" height="18" fill="#7e77cb"/><rect x="1006" y="362" width="18" height="18" fill="#b8adb7"/><rect x="1024" y="362" width="18" height="18" fill="#d0c3b3"/><rect x="1042" y="362" width="18" height="18" fill="#aea5bd"/><rect x="1060" y="362" width="18" height="18" fill="#7c76cd"/><rect x="1078" y="362" width="18" height="18" fill="#e0d6a5"/><rect x="1096" y="362" width="18" height="18" fill="#e0d89c"/><rect x="1114" y="362" width="18" height="18" fill="#cabfb5"/><rect x="1132" y="362" width="18" height="18" fill="#b8adbc"/><rect x="1150" y="362" width="18" height="18" fill="#c4b9b6"/><rect x="1168" y="362" width="18" height="18" fill="#b9aebe"/><rect x="1186" y="362" width="18" height="18" fill="#aea8bc"/><rect x="1204" y="362" width="18" height="18" fill="#d8cfad"/><rect x="1348" y="362" width="18" height="18" fill="#b9adb9"/><rect x="1366" y="362" width="18" height="18" fill="#8b83c7"/><rect x="1384" y="362" width="18" height="18" fill="#7e77cb"/><rect x="1402" y="362" width="18" height="18" fill="#bcaeb2"/><rect x="1420" y="362" width="18" height="18" fill="#b3a8bb"/><rect x="1438" y="362" width="18" height="18" fill="#aea4bd"/><rect x="1456" y="362" width="18" height="18" fill="#b7abb7"/><rect x="1474" y="362" width="18" height="18" fill="#a59fbf"/><rect x="1492" y="362" width="18" height="18" fill="#8e86c7"/><rect x="1510" y="362" width="18" height="18" fill="#c2b5b1"/><rect x="1528" y="362" width="18" height="18" fill="#aba2bd"/><rect x="1546" y="362" width="18" height="18" fill="#b2a7b9"/><rect x="1564" y="362" width="18" height="18" fill="#b9abb4"/><rect x="1582" y="362" width="18" height="18" fill="#aba2bd"/><rect x="1600" y="362" width="18" height="18" fill="#978fc5"/><rect x="1996" y="362" width="18" height="18" fill="#aba3bd"/><rect x="2014" y="362" width="18" height="18" fill="#bab0b7"/><rect x="2032" y="362" width="18" height="18" fill="#c3bab6"/><rect x="2050" y="362" width="18" height="18" fill="#d2c4b5"/><rect x="2068" y="362" width="36" height="18" fill="#b1abbc"/><rect x="2356" y="362" width="18" height="18" fill="#d9cdb0"/><rect x="2374" y="362" width="18" height="18" fill="#b8afb9"/><rect x="2392" y="362" width="18" height="18" fill="#aea7bc"/><rect x="2410" y="362" width="18" height="18" fill="#aea6c0"/><rect x="2428" y="362" width="18" height="18" fill="#aca7bc"/><rect x="2446" y="362" width="18" height="18" fill="#c2b8b6"/><rect x="2464" y="362" width="18" height="18" fill="#c3b9b2"/><rect x="844" y="380" width="54" height="18" fill="#f3e9b6"/><rect x="898" y="380" width="18" height="18" fill="#e2dcb0"/><rect x="916" y="380" width="18" height="18" fill="#aca8ad"/><rect x="934" y="380" width="18" height="18" fill="#d0c8a4"/><rect x="952" y="380" width="18" height="18" fill="#bcb5ab"/><rect x="970" y="380" width="18" height="18" fill="#aba7ae"/><rect x="988" y="380" width="18" height="18" fill="#b8b3ab"/><rect x="1006" y="380" width="18" height="18" fill="#c5bcab"/><rect x="1024" y="380" width="18" height="18" fill="#d5cfa5"/><rect x="1042" y="380" width="18" height="18" fill="#bcb5ab"/><rect x="1060" y="380" width="18" height="18" fill="#bab4aa"/><rect x="1078" y="380" width="18" height="18" fill="#cfc8a5"/><rect x="1096" y="380" width="18" height="18" fill="#cdc7a5"/><rect x="1114" y="380" width="108" height="18" fill="#f0e9b6"/><rect x="1348" y="380" width="18" height="18" fill="#e1d7c0"/><rect x="1366" y="380" width="18" height="18" fill="#d1c9c0"/><rect x="1384" y="380" width="18" height="18" fill="#d8cdbf"/><rect x="1402" y="380" width="72" height="18" fill="#ebe3bc"/><rect x="1474" y="380" width="36" height="18" fill="#e0d7bd"/><rect x="1510" y="380" width="18" height="18" fill="#e3dbbd"/><rect x="1528" y="380" width="18" height="18" fill="#dfd5bd"/><rect x="1546" y="380" width="18" height="18" fill="#e1d9be"/><rect x="1564" y="380" width="18" height="18" fill="#ece4b8"/><rect x="1582" y="380" width="18" height="18" fill="#e1d9c0"/><rect x="1600" y="380" width="18" height="18" fill="#ddd4c0"/><rect x="1996" y="380" width="108" height="18" fill="#ece2bb"/><rect x="2104" y="380" width="252" height="18" fill="#f3edbe"/><rect x="2356" y="380" width="126" height="18" fill="#eee7bc"/><rect x="2482" y="380" width="36" height="18" fill="#f3edbe"/><rect x="844" y="398" width="18" height="18" fill="#d0d8fd"/><rect x="862" y="398" width="18" height="18" fill="#d2d3fd"/><rect x="880" y="398" width="18" height="18" fill="#cad5fd"/><rect x="898" y="398" width="18" height="18" fill="#e8f0fd"/><rect x="916" y="398" width="18" height="18" fill="#8489fb"/><rect x="934" y="398" width="18" height="18" fill="#9ba1fb"/><rect x="952" y="398" width="18" height="18" fill="#abb1fb"/><rect x="970" y="398" width="18" height="18" fill="#b1b6fc"/><rect x="988" y="398" width="18" height="18" fill="#adb2fc"/><rect x="1006" y="398" width="18" height="18" fill="#a5aafb"/><rect x="1024" y="398" width="18" height="18" fill="#9ba0fb"/><rect x="1042" y="398" width="18" height="18" fill="#abb0fc"/><rect x="1060" y="398" width="18" height="18" fill="#9499fb"/><rect x="1078" y="398" width="18" height="18" fill="#e4ecfd"/><rect x="1114" y="398" width="18" height="18" fill="#c0c4fd"/><rect x="1132" y="398" width="18" height="18" fill="#b7bcfc"/><rect x="1150" y="398" width="18" height="18" fill="#b9befc"/><rect x="1168" y="398" width="18" height="18" fill="#b9bdfc"/><rect x="1186" y="398" width="18" height="18" fill="#c8d3fd"/><rect x="1204" y="398" width="18" height="18" fill="#d2dcfd"/><rect x="1348" y="398" width="18" height="18" fill="#c1c6fd"/><rect x="1366" y="398" width="18" height="18" fill="#b6bcfc"/><rect x="1384" y="398" width="18" height="18" fill="#8b92fb"/><rect x="1402" y="398" width="18" height="18" fill="#a4aafb"/><rect x="1420" y="398" width="18" height="18" fill="#d3d9fd"/><rect x="844" y="416" width="18" height="18" fill="#d9e1fd"/><rect x="862" y="416" width="36" height="18" fill="#d9e2fd"/><rect x="898" y="416" width="18" height="18" fill="#e8f0fd"/><rect x="916" y="416" width="18" height="18" fill="#9198fb"/><rect x="934" y="416" width="18" height="18" fill="#b0b5fc"/><rect x="952" y="416" width="18" height="18" fill="#c6cdfd"/><rect x="970" y="416" width="18" height="18" fill="#d6dffd"/><rect x="988" y="416" width="18" height="18" fill="#c5cbfd"/><rect x="1006" y="416" width="18" height="18" fill="#b6bcfc"/><rect x="1024" y="416" width="18" height="18" fill="#aeb4fc"/><rect x="1042" y="416" width="18" height="18" fill="#c8cdfd"/><rect x="1060" y="416" width="18" height="18" fill="#a3a9fb"/><rect x="1114" y="416" width="18" height="18" fill="#d5dbfd"/><rect x="1132" y="416" width="18" height="18" fill="#d0d8fd"/><rect x="1150" y="416" width="18" height="18" fill="#dae3fd"/><rect x="1168" y="416" width="18" height="18" fill="#d2dbfd"/><rect x="1186" y="416" width="18" height="18" fill="#d7dffd"/><rect x="1204" y="416" width="18" height="18" fill="#dce4fd"/><rect x="1348" y="416" width="18" height="18" fill="#d6dcfd"/><rect x="1366" y="416" width="18" height="18" fill="#b3b9fc"/><rect x="1384" y="416" width="18" height="18" fill="#afb4fc"/><rect x="1402" y="416" width="18" height="18" fill="#c5cafd"/><rect x="1420" y="416" width="18" height="18" fill="#d9e0fd"/><rect x="844" y="434" width="18" height="18" fill="#eeeffd"/><rect x="862" y="434" width="18" height="18" fill="#efeefd"/><rect x="880" y="434" width="18" height="18" fill="#eeeefd"/><rect x="898" y="434" width="18" height="18" fill="#fbfbff"/><rect x="916" y="434" width="18" height="18" fill="#c7c8fd"/><rect x="934" y="434" width="18" height="18" fill="#cccdfd"/><rect x="952" y="434" width="18" height="18" fill="#d5d6fd"/><rect x="970" y="434" width="18" height="18" fill="#c5c5fd"/><rect x="988" y="434" width="18" height="18" fill="#c3c4fd"/><rect x="1006" y="434" width="18" height="18" fill="#d4d4fd"/><rect x="1024" y="434" width="18" height="18" fill="#d6d5fd"/><rect x="1042" y="434" width="18" height="18" fill="#cfd0fd"/><rect x="1060" y="434" width="18" height="18" fill="#bcbcfc"/><rect x="1114" y="434" width="18" height="18" fill="#dcdefd"/><rect x="1132" y="434" width="72" height="18" fill="#dbdcfd"/><rect x="1204" y="434" width="18" height="18" fill="#eeeefd"/><rect x="1348" y="434" width="18" height="18" fill="#e5e3fd"/><rect x="1366" y="434" width="18" height="18" fill="#dadffd"/><rect x="1384" y="434" width="18" height="18" fill="#dcdcfd"/><rect x="1402" y="434" width="18" height="18" fill="#dcdffd"/><rect x="1420" y="434" width="18" height="18" fill="#c7c8fd"/><rect x="1438" y="434" width="18" height="18" fill="#b6b8fc"/><rect x="1456" y="434" width="18" height="18" fill="#dcdcfd"/><rect x="844" y="452" width="54" height="18" fill="#e6e7fd"/><rect x="898" y="452" width="18" height="18" fill="#f7f7ff"/><rect x="916" y="452" width="18" height="18" fill="#a2a6fb"/><rect x="934" y="452" width="18" height="18" fill="#b5b8fc"/><rect x="952" y="452" width="18" height="18" fill="#bbbcfc"/><rect x="970" y="452" width="18" height="18" fill="#c6c8fd"/><rect x="988" y="452" width="18" height="18" fill="#b1b4fc"/><rect x="1006" y="452" width="18" height="18" fill="#ccccfd"/><rect x="1024" y="452" width="18" height="18" fill="#c5c6fd"/><rect x="1042" y="452" width="18" height="18" fill="#b3b5fc"/><rect x="1060" y="452" width="18" height="18" fill="#a6a9fb"/><rect x="1078" y="452" width="18" height="18" fill="#e8e8fd"/><rect x="1114" y="452" width="18" height="18" fill="#e2e4fd"/><rect x="1132" y="452" width="18" height="18" fill="#d4d6fd"/><rect x="1150" y="452" width="18" height="18" fill="#e1e3fd"/><rect x="1168" y="452" width="18" height="18" fill="#d4d6fd"/><rect x="1186" y="452" width="18" height="18" fill="#e6e7fd"/><rect x="1204" y="452" width="18" height="18" fill="#e8e9fd"/><rect x="1348" y="452" width="18" height="18" fill="#dddcfd"/><rect x="1366" y="452" width="18" height="18" fill="#cecffd"/><rect x="1384" y="452" width="18" height="18" fill="#d5d3fd"/><rect x="1402" y="452" width="18" height="18" fill="#d5d8fd"/><rect x="1420" y="452" width="36" height="18" fill="#b3b5fc"/><rect x="1456" y="452" width="18" height="18" fill="#dcdcfd"/><rect x="844" y="470" width="54" height="18" fill="#e2e6fd"/><rect x="898" y="470" width="18" height="18" fill="#eef3fe"/><rect x="916" y="470" width="36" height="18" fill="#d3d9fd"/><rect x="952" y="470" width="18" height="18" fill="#d9defd"/><rect x="970" y="470" width="18" height="18" fill="#d3d9fd"/><rect x="988" y="470" width="18" height="18" fill="#c7ccfd"/><rect x="1006" y="470" width="18" height="18" fill="#dbe1fd"/><rect x="1024" y="470" width="18" height="18" fill="#dce2fd"/><rect x="1042" y="470" width="36" height="18" fill="#c9cffd"/><rect x="1078" y="470" width="18" height="18" fill="#eef4fe"/><rect x="1114" y="470" width="108" height="18" fill="#dbe2fd"/><rect x="1348" y="470" width="18" height="18" fill="#eaeffe"/><rect x="1366" y="470" width="18" height="18" fill="#dde1fd"/><rect x="1384" y="470" width="18" height="18" fill="#d0d6fd"/><rect x="1402" y="470" width="36" height="18" fill="#dae0fd"/><rect x="1438" y="470" width="18" height="18" fill="#cbd0fd"/><rect x="1456" y="470" width="18" height="18" fill="#d6dcfd"/><rect x="1474" y="470" width="18" height="18" fill="#cfd4fd"/><rect x="1492" y="470" width="36" height="18" fill="#dbe0fd"/><rect x="1528" y="470" width="18" height="18" fill="#dadcfd"/><rect x="1546" y="470" width="18" height="18" fill="#e3e7fd"/><rect x="1564" y="470" width="18" height="18" fill="#eaeefe"/><rect x="844" y="488" width="54" height="18" fill="#cdd5fd"/><rect x="898" y="488" width="18" height="18" fill="#e4ebfd"/><rect x="916" y="488" width="18" height="18" fill="#7d82fb"/><rect x="934" y="488" width="18" height="18" fill="#8f95fb"/><rect x="952" y="488" width="18" height="18" fill="#989efb"/><rect x="970" y="488" width="18" height="18" fill="#9aa0fb"/><rect x="988" y="488" width="18" height="18" fill="#9399fb"/><rect x="1006" y="488" width="18" height="18" fill="#a6acfb"/><rect x="1024" y="488" width="36" height="18" fill="#9ca2fb"/><rect x="1060" y="488" width="18" height="18" fill="#8085fb"/><rect x="1078" y="488" width="18" height="18" fill="#d4dbfd"/><rect x="1114" y="488" width="18" height="18" fill="#bfc5fd"/><rect x="1132" y="488" width="18" height="18" fill="#b3b9fc"/><rect x="1150" y="488" width="18" height="18" fill="#b8befc"/><rect x="1168" y="488" width="18" height="18" fill="#b3b9fc"/><rect x="1186" y="488" width="18" height="18" fill="#b2bafc"/><rect x="1204" y="488" width="18" height="18" fill="#d4dcfd"/><rect x="1348" y="488" width="18" height="18" fill="#c5c9fd"/><rect x="1366" y="488" width="18" height="18" fill="#abb0fc"/><rect x="1384" y="488" width="18" height="18" fill="#aab0fc"/><rect x="1402" y="488" width="36" height="18" fill="#a3a8fb"/><rect x="1438" y="488" width="18" height="18" fill="#979cfb"/><rect x="1456" y="488" width="18" height="18" fill="#7f84fb"/><rect x="1474" y="488" width="18" height="18" fill="#9196fb"/><rect x="1492" y="488" width="18" height="18" fill="#abb0fc"/><rect x="1510" y="488" width="18" height="18" fill="#b0b5fc"/><rect x="1528" y="488" width="18" height="18" fill="#b5b9fc"/><rect x="1546" y="488" width="18" height="18" fill="#c6cefd"/><rect x="1564" y="488" width="18" height="18" fill="#d5e0fd"/><rect x="844" y="506" width="72" height="18" fill="#f3f6fe"/><rect x="916" y="506" width="144" height="18" fill="#f0f2fe"/><rect x="1060" y="506" width="18" height="18" fill="#e3e5fd"/><rect x="1078" y="506" width="18" height="18" fill="#f3f6fe"/><rect x="1114" y="506" width="108" height="18" fill="#f3f6fe"/><rect x="1348" y="506" width="234" height="18" fill="#eef1fe"/><rect x="844" y="524" width="18" height="18" fill="#dcdcfd"/><rect x="862" y="524" width="18" height="18" fill="#d5d5fd"/><rect x="880" y="524" width="18" height="18" fill="#d6d7fd"/><rect x="898" y="524" width="18" height="18" fill="#f6f6ff"/><rect x="916" y="524" width="18" height="18" fill="#8489fb"/><rect x="934" y="524" width="18" height="18" fill="#9ca0fb"/><rect x="952" y="524" width="18" height="18" fill="#a2a5fb"/><rect x="970" y="524" width="18" height="18" fill="#9ea2fb"/><rect x="988" y="524" width="18" height="18" fill="#8a8efb"/><rect x="1006" y="524" width="18" height="18" fill="#aaaefb"/><rect x="1024" y="524" width="18" height="18" fill="#a9adfb"/><rect x="1042" y="524" width="36" height="18" fill="#9a9efb"/><rect x="1078" y="524" width="18" height="18" fill="#f1f0fe"/><rect x="1114" y="524" width="18" height="18" fill="#c3c4fc"/><rect x="1132" y="524" width="18" height="18" fill="#b4b6fc"/><rect x="1150" y="524" width="18" height="18" fill="#babcfc"/><rect x="1168" y="524" width="18" height="18" fill="#b3b4fc"/><rect x="1186" y="524" width="18" height="18" fill="#c8c8fd"/><rect x="1204" y="524" width="18" height="18" fill="#dfe0fd"/><rect x="1348" y="524" width="18" height="18" fill="#c4c2fd"/><rect x="1366" y="524" width="18" height="18" fill="#9297fb"/><rect x="1384" y="524" width="18" height="18" fill="#9a9ffb"/><rect x="1402" y="524" width="18" height="18" fill="#abaefc"/><rect x="1420" y="524" width="18" height="18" fill="#8a8ffb"/><rect x="1438" y="524" width="18" height="18" fill="#8c90fb"/><rect x="1456" y="524" width="18" height="18" fill="#8f93fb"/><rect x="1474" y="524" width="18" height="18" fill="#9297fb"/><rect x="1492" y="524" width="18" height="18" fill="#c0c0fd"/><rect x="1510" y="524" width="18" height="18" fill="#bcbdfd"/><rect x="1528" y="524" width="18" height="18" fill="#999dfb"/><rect x="1546" y="524" width="18" height="18" fill="#adb0fc"/><rect x="1564" y="524" width="18" height="18" fill="#cdcdfd"/><rect x="844" y="542" width="54" height="18" fill="#f4f7fe"/><rect x="898" y="542" width="18" height="18" fill="#f7f9fe"/><rect x="916" y="542" width="18" height="18" fill="#e4e7fd"/><rect x="934" y="542" width="18" height="18" fill="#e3e6fd"/><rect x="952" y="542" width="18" height="18" fill="#e7e9fd"/><rect x="970" y="542" width="18" height="18" fill="#e9ebfd"/><rect x="988" y="542" width="18" height="18" fill="#ebedfd"/><rect x="1006" y="542" width="18" height="18" fill="#eef0fe"/><rect x="1024" y="542" width="18" height="18" fill="#e9ebfd"/><rect x="1042" y="542" width="18" height="18" fill="#e7e9fd"/><rect x="1060" y="542" width="18" height="18" fill="#dfe1fd"/><rect x="1078" y="542" width="18" height="18" fill="#f0f2fe"/><rect x="1114" y="542" width="108" height="18" fill="#f4f7fe"/><rect x="1348" y="542" width="18" height="18" fill="#e7e8fd"/><rect x="1366" y="542" width="36" height="18" fill="#e2e3fd"/><rect x="1402" y="542" width="18" height="18" fill="#eef0fe"/><rect x="1420" y="542" width="18" height="18" fill="#e3e5fd"/><rect x="1438" y="542" width="18" height="18" fill="#e9ebfd"/><rect x="1456" y="542" width="18" height="18" fill="#e4e6fd"/><rect x="1474" y="542" width="18" height="18" fill="#eaebfd"/><rect x="1492" y="542" width="18" height="18" fill="#eeeffe"/><rect x="1510" y="542" width="72" height="18" fill="#f5f8fe"/><rect x="844" y="560" width="18" height="18" fill="#ccd4fd"/><rect x="862" y="560" width="18" height="18" fill="#cfd4fd"/><rect x="880" y="560" width="18" height="18" fill="#c2c9fd"/><rect x="898" y="560" width="18" height="18" fill="#e6edfe"/><rect x="916" y="560" width="18" height="18" fill="#8d93fb"/><rect x="934" y="560" width="18" height="18" fill="#99a0fb"/><rect x="952" y="560" width="18" height="18" fill="#a3a9fb"/><rect x="970" y="560" width="18" height="18" fill="#a6acfb"/><rect x="988" y="560" width="18" height="18" fill="#9096fb"/><rect x="1006" y="560" width="18" height="18" fill="#a1a7fb"/><rect x="1024" y="560" width="18" height="18" fill="#a6acfb"/><rect x="1042" y="560" width="18" height="18" fill="#9da3fb"/><rect x="1060" y="560" width="18" height="18" fill="#8c92fb"/><rect x="1078" y="560" width="18" height="18" fill="#dde4fd"/><rect x="1114" y="560" width="18" height="18" fill="#bdc1fc"/><rect x="1132" y="560" width="18" height="18" fill="#b2b6fc"/><rect x="1150" y="560" width="18" height="18" fill="#b7bcfc"/><rect x="1168" y="560" width="18" height="18" fill="#b0b4fc"/><rect x="1186" y="560" width="18" height="18" fill="#c6cdfd"/><rect x="1204" y="560" width="18" height="18" fill="#d5dbfd"/><rect x="1348" y="560" width="18" height="18" fill="#babefc"/><rect x="1366" y="560" width="18" height="18" fill="#a0a5fb"/><rect x="1384" y="560" width="18" height="18" fill="#7b80fb"/><rect x="1402" y="560" width="18" height="18" fill="#aab0fc"/><rect x="1420" y="560" width="18" height="18" fill="#a3a9fb"/><rect x="1438" y="560" width="36" height="18" fill="#9298fb"/><rect x="1474" y="560" width="18" height="18" fill="#8f95fb"/><rect x="1492" y="560" width="18" height="18" fill="#aeb3fc"/><rect x="1510" y="560" width="18" height="18" fill="#adb2fc"/><rect x="1528" y="560" width="18" height="18" fill="#cfd3fd"/><rect x="1546" y="560" width="18" height="18" fill="#c8d4fd"/><rect x="1564" y="560" width="18" height="18" fill="#bfc5fd"/><rect x="1582" y="560" width="18" height="18" fill="#cfdafd"/><rect x="844" y="578" width="72" height="18" fill="#e2e9fd"/><rect x="916" y="578" width="18" height="18" fill="#c4c9fd"/><rect x="934" y="578" width="18" height="18" fill="#c9cdfd"/><rect x="952" y="578" width="18" height="18" fill="#ced4fd"/><rect x="970" y="578" width="18" height="18" fill="#cbd0fd"/><rect x="988" y="578" width="18" height="18" fill="#c8ccfd"/><rect x="1006" y="578" width="18" height="18" fill="#d8dffd"/><rect x="1024" y="578" width="18" height="18" fill="#d3d9fd"/><rect x="1042" y="578" width="18" height="18" fill="#c6cbfd"/><rect x="1060" y="578" width="18" height="18" fill="#c5cafd"/><rect x="1078" y="578" width="18" height="18" fill="#dfe5fd"/><rect x="1114" y="578" width="108" height="18" fill="#e0e5fd"/><rect x="1348" y="578" width="18" height="18" fill="#d8dcfd"/><rect x="1366" y="578" width="18" height="18" fill="#c7ccfd"/><rect x="1384" y="578" width="18" height="18" fill="#b0b5fc"/><rect x="1402" y="578" width="18" height="18" fill="#d1d5fd"/><rect x="1420" y="578" width="18" height="18" fill="#d8dcfd"/><rect x="1438" y="578" width="18" height="18" fill="#d5d8fd"/><rect x="1456" y="578" width="18" height="18" fill="#bfc3fd"/><rect x="1474" y="578" width="18" height="18" fill="#d1d8fd"/><rect x="1492" y="578" width="18" height="18" fill="#d4d9fd"/><rect x="1510" y="578" width="18" height="18" fill="#e3e6fd"/><rect x="1528" y="578" width="18" height="18" fill="#e9ecfe"/><rect x="1546" y="578" width="18" height="18" fill="#dbe2fd"/><rect x="1564" y="578" width="18" height="18" fill="#e3e8fd"/><rect x="1582" y="578" width="18" height="18" fill="#e8edfe"/><rect x="844" y="596" width="54" height="18" fill="#ebebfd"/><rect x="898" y="596" width="18" height="18" fill="#fdfdff"/><rect x="916" y="596" width="18" height="18" fill="#b9bbfc"/><rect x="934" y="596" width="18" height="18" fill="#c6c7fd"/><rect x="952" y="596" width="18" height="18" fill="#cbcdfd"/><rect x="970" y="596" width="18" height="18" fill="#c9c9fd"/><rect x="988" y="596" width="18" height="18" fill="#b4b5fc"/><rect x="1006" y="596" width="36" height="18" fill="#cdcdfd"/><rect x="1042" y="596" width="18" height="18" fill="#c6c7fd"/><rect x="1060" y="596" width="18" height="18" fill="#b5b6fc"/><rect x="1114" y="596" width="18" height="18" fill="#dcdcfd"/><rect x="1132" y="596" width="18" height="18" fill="#d6d6fd"/><rect x="1150" y="596" width="18" height="18" fill="#d8d8fd"/><rect x="1168" y="596" width="18" height="18" fill="#d6d5fd"/><rect x="1186" y="596" width="18" height="18" fill="#e3e4fd"/><rect x="1204" y="596" width="18" height="18" fill="#ebebfd"/><rect x="1348" y="596" width="18" height="18" fill="#dad8fd"/><rect x="1366" y="596" width="18" height="18" fill="#c7c5fd"/><rect x="1384" y="596" width="18" height="18" fill="#a2a4fb"/><rect x="1402" y="596" width="36" height="18" fill="#d0d0fd"/><rect x="1438" y="596" width="18" height="18" fill="#adb0fc"/><rect x="1456" y="596" width="18" height="18" fill="#bbbcfc"/><rect x="1474" y="596" width="18" height="18" fill="#b8b9fc"/><rect x="1492" y="596" width="18" height="18" fill="#d5d4fd"/><rect x="1510" y="596" width="18" height="18" fill="#d4d4fd"/><rect x="1528" y="596" width="18" height="18" fill="#e8e9fd"/><rect x="1546" y="596" width="18" height="18" fill="#ededfe"/><rect x="844" y="614" width="18" height="18" fill="#efeffd"/><rect x="862" y="614" width="18" height="18" fill="#ebebfd"/><rect x="880" y="614" width="18" height="18" fill="#f1f2fe"/><rect x="898" y="614" width="18" height="18" fill="#ffffff"/><rect x="916" y="614" width="18" height="18" fill="#b4b6fc"/><rect x="934" y="614" width="18" height="18" fill="#bfc0fc"/><rect x="952" y="614" width="54" height="18" fill="#cdcefd"/><rect x="1006" y="614" width="18" height="18" fill="#dddefd"/><rect x="1024" y="614" width="18" height="18" fill="#d0d1fd"/><rect x="1042" y="614" width="18" height="18" fill="#c0c1fc"/><rect x="1060" y="614" width="18" height="18" fill="#b0b2fc"/><rect x="1078" y="614" width="18" height="18" fill="#e7e8fd"/><rect x="1114" y="614" width="18" height="18" fill="#e8e9fd"/><rect x="1132" y="614" width="18" height="18" fill="#d8d9fd"/><rect x="1150" y="614" width="18" height="18" fill="#ebebfd"/><rect x="1168" y="614" width="18" height="18" fill="#e1e1fd"/><rect x="1186" y="614" width="18" height="18" fill="#e3e4fd"/><rect x="1204" y="614" width="18" height="18" fill="#f2f3fe"/><rect x="1348" y="614" width="18" height="18" fill="#dad8fd"/><rect x="1366" y="614" width="18" height="18" fill="#c4c3fd"/><rect x="1384" y="614" width="18" height="18" fill="#a2a4fb"/><rect x="1402" y="614" width="36" height="18" fill="#d0d0fd"/><rect x="1438" y="614" width="18" height="18" fill="#c9cafd"/><rect x="1456" y="614" width="18" height="18" fill="#adaefc"/><rect x="1474" y="614" width="18" height="18" fill="#c2c3fd"/><rect x="1492" y="614" width="18" height="18" fill="#d6d5fd"/><rect x="1510" y="614" width="18" height="18" fill="#e3e3fd"/><rect x="1528" y="614" width="18" height="18" fill="#efeffe"/><rect x="1546" y="614" width="18" height="18" fill="#f5f5fe"/><rect x="844" y="632" width="54" height="18" fill="#dee6fd"/><rect x="898" y="632" width="18" height="18" fill="#eaf0fe"/><rect x="916" y="632" width="18" height="18" fill="#c3c9fd"/><rect x="934" y="632" width="36" height="18" fill="#c5cbfd"/><rect x="970" y="632" width="36" height="18" fill="#bfc5fd"/><rect x="1006" y="632" width="18" height="18" fill="#cfd5fd"/><rect x="1024" y="632" width="18" height="18" fill="#d3d8fd"/><rect x="1042" y="632" width="36" height="18" fill="#c2c8fd"/><rect x="1078" y="632" width="36" height="18" fill="#eaf0fe"/><rect x="1114" y="632" width="108" height="18" fill="#d6dcfd"/><rect x="1348" y="632" width="18" height="18" fill="#d8dcfd"/><rect x="1366" y="632" width="18" height="18" fill="#bac1fc"/><rect x="1384" y="632" width="36" height="18" fill="#c8cdfd"/><rect x="1420" y="632" width="18" height="18" fill="#abb1fc"/><rect x="1438" y="632" width="18" height="18" fill="#bfc5fd"/><rect x="1456" y="632" width="36" height="18" fill="#c2c8fd"/><rect x="1492" y="632" width="18" height="18" fill="#d3d9fd"/><rect x="1510" y="632" width="18" height="18" fill="#cdd3fd"/><rect x="1528" y="632" width="36" height="18" fill="#c8cefd"/><rect x="1564" y="632" width="18" height="18" fill="#d8defd"/><rect x="844" y="650" width="18" height="18" fill="#d1d7fd"/><rect x="862" y="650" width="36" height="18" fill="#c8cefd"/><rect x="898" y="650" width="18" height="18" fill="#e6ebfe"/><rect x="916" y="650" width="18" height="18" fill="#8c92fb"/><rect x="934" y="650" width="18" height="18" fill="#9ba1fb"/><rect x="952" y="650" width="18" height="18" fill="#a5abfb"/><rect x="970" y="650" width="18" height="18" fill="#acb1fc"/><rect x="988" y="650" width="18" height="18" fill="#9aa0fb"/><rect x="1006" y="650" width="18" height="18" fill="#a9aefc"/><rect x="1024" y="650" width="18" height="18" fill="#a3a9fb"/><rect x="1042" y="650" width="18" height="18" fill="#9da3fb"/><rect x="1060" y="650" width="18" height="18" fill="#9095fb"/><rect x="1078" y="650" width="18" height="18" fill="#d4dafd"/><rect x="1114" y="650" width="18" height="18" fill="#c9cefd"/><rect x="1132" y="650" width="18" height="18" fill="#b9befc"/><rect x="1150" y="650" width="18" height="18" fill="#c3c8fd"/><rect x="1168" y="650" width="18" height="18" fill="#b9befc"/><rect x="1186" y="650" width="18" height="18" fill="#c6cdfd"/><rect x="1204" y="650" width="18" height="18" fill="#d6dcfd"/><rect x="1348" y="650" width="18" height="18" fill="#bbbffc"/><rect x="1366" y="650" width="36" height="18" fill="#979dfb"/><rect x="1402" y="650" width="18" height="18" fill="#b2b8fc"/><rect x="1420" y="650" width="18" height="18" fill="#8d92fb"/><rect x="1438" y="650" width="18" height="18" fill="#9a9ffb"/><rect x="1456" y="650" width="18" height="18" fill="#8c91fb"/><rect x="1474" y="650" width="18" height="18" fill="#9ca1fb"/><rect x="1492" y="650" width="18" height="18" fill="#c3c8fd"/><rect x="1510" y="650" width="18" height="18" fill="#c2c6fd"/><rect x="1528" y="650" width="18" height="18" fill="#aeb4fc"/><rect x="1546" y="650" width="18" height="18" fill="#b9bffc"/><rect x="1564" y="650" width="18" height="18" fill="#d2d9fd"/><rect x="844" y="668" width="54" height="18" fill="#f1f3fe"/><rect x="898" y="668" width="18" height="18" fill="#fbfbff"/><rect x="916" y="668" width="18" height="18" fill="#e5e7fd"/><rect x="934" y="668" width="36" height="18" fill="#e9ebfd"/><rect x="970" y="668" width="18" height="18" fill="#e1e3fd"/><rect x="988" y="668" width="18" height="18" fill="#eaebfd"/><rect x="1006" y="668" width="18" height="18" fill="#cfd0fd"/><rect x="1024" y="668" width="18" height="18" fill="#dcdefd"/><rect x="1042" y="668" width="18" height="18" fill="#f0f1fe"/><rect x="1060" y="668" width="18" height="18" fill="#e4e5fd"/><rect x="1078" y="668" width="18" height="18" fill="#f7f8fe"/><rect x="1114" y="668" width="108" height="18" fill="#eeeffd"/><rect x="1348" y="668" width="18" height="18" fill="#e8eafd"/><rect x="1366" y="668" width="18" height="18" fill="#e5e7fd"/><rect x="1384" y="668" width="18" height="18" fill="#dcdefd"/><rect x="1402" y="668" width="36" height="18" fill="#e6e8fd"/><rect x="1438" y="668" width="18" height="18" fill="#f0f1fe"/><rect x="1456" y="668" width="18" height="18" fill="#e3e4fd"/><rect x="1474" y="668" width="18" height="18" fill="#eaebfd"/><rect x="1492" y="668" width="18" height="18" fill="#ebecfd"/><rect x="1510" y="668" width="18" height="18" fill="#e2e3fd"/><rect x="1528" y="668" width="36" height="18" fill="#edeffe"/><rect x="1564" y="668" width="18" height="18" fill="#f7f9fe"/><rect x="844" y="686" width="18" height="18" fill="#e1e0fd"/><rect x="862" y="686" width="18" height="18" fill="#dcdcfd"/><rect x="880" y="686" width="18" height="18" fill="#f4f3fe"/><rect x="898" y="686" width="18" height="18" fill="#fbfbff"/><rect x="916" y="686" width="18" height="18" fill="#8589fb"/><rect x="934" y="686" width="18" height="18" fill="#999dfb"/><rect x="952" y="686" width="18" height="18" fill="#b0b3fc"/><rect x="970" y="686" width="18" height="18" fill="#b5b8fc"/><rect x="988" y="686" width="18" height="18" fill="#979bfb"/><rect x="1006" y="686" width="36" height="18" fill="#878bfb"/><rect x="1042" y="686" width="18" height="18" fill="#9fa2fb"/><rect x="1060" y="686" width="18" height="18" fill="#9a9dfb"/><rect x="1078" y="686" width="18" height="18" fill="#efedfe"/><rect x="1114" y="686" width="18" height="18" fill="#cbcbfd"/><rect x="1132" y="686" width="18" height="18" fill="#bbbcfc"/><rect x="1150" y="686" width="18" height="18" fill="#c6c8fd"/><rect x="1168" y="686" width="18" height="18" fill="#bbbbfc"/><rect x="1186" y="686" width="18" height="18" fill="#d6d7fd"/><rect x="1204" y="686" width="18" height="18" fill="#f3f2fe"/><rect x="1348" y="686" width="18" height="18" fill="#c5c5fd"/><rect x="1366" y="686" width="18" height="18" fill="#a9acfb"/><rect x="1384" y="686" width="36" height="18" fill="#9296fb"/><rect x="1420" y="686" width="18" height="18" fill="#8b90fb"/><rect x="1438" y="686" width="18" height="18" fill="#a6a4fb"/><rect x="1456" y="686" width="18" height="18" fill="#b5b6fc"/><rect x="1474" y="686" width="18" height="18" fill="#d4d9fd"/><rect x="1492" y="686" width="18" height="18" fill="#bbbafc"/><rect x="1510" y="686" width="18" height="18" fill="#aaaefc"/><rect x="1528" y="686" width="18" height="18" fill="#b9bbfc"/><rect x="1546" y="686" width="18" height="18" fill="#d9dafd"/><rect x="2518" y="704" width="18" height="18" fill="#e6e8ec"/><rect x="2536" y="704" width="18" height="18" fill="#dadada"/><rect x="844" y="704" width="72" height="18" fill="#f3f7fe"/><rect x="916" y="704" width="18" height="18" fill="#f0f4fe"/><rect x="934" y="704" width="18" height="18" fill="#ebf0fe"/><rect x="952" y="704" width="54" height="18" fill="#eef2fe"/><rect x="1006" y="704" width="18" height="18" fill="#dfe2fd"/><rect x="1024" y="704" width="18" height="18" fill="#e5e8fd"/><rect x="1042" y="704" width="54" height="18" fill="#eff3fe"/><rect x="1114" y="704" width="108" height="18" fill="#f3f6fe"/><rect x="1348" y="704" width="234" height="18" fill="#f1f5fe"/><rect x="2518" y="722" width="18" height="18" fill="#e4e6ea"/><rect x="2536" y="722" width="18" height="18" fill="#e0e0e0"/><rect x="844" y="722" width="18" height="18" fill="#cad2fd"/><rect x="862" y="722" width="18" height="18" fill="#c1c8fd"/><rect x="880" y="722" width="18" height="18" fill="#b9c0fc"/><rect x="898" y="722" width="18" height="18" fill="#e3ebfe"/><rect x="916" y="722" width="18" height="18" fill="#8287fb"/><rect x="934" y="722" width="18" height="18" fill="#9399fb"/><rect x="952" y="722" width="18" height="18" fill="#9ea4fb"/><rect x="970" y="722" width="18" height="18" fill="#9da3fb"/><rect x="988" y="722" width="18" height="18" fill="#8a8ffb"/><rect x="1006" y="722" width="18" height="18" fill="#6f74fa"/><rect x="1024" y="722" width="18" height="18" fill="#7d82fb"/><rect x="1042" y="722" width="18" height="18" fill="#9096fb"/><rect x="1060" y="722" width="18" height="18" fill="#8288fb"/><rect x="1078" y="722" width="18" height="18" fill="#dbe2fd"/><rect x="1114" y="722" width="18" height="18" fill="#b5bbfc"/><rect x="1132" y="722" width="18" height="18" fill="#a5abfb"/><rect x="1150" y="722" width="18" height="18" fill="#abb1fc"/><rect x="1168" y="722" width="18" height="18" fill="#a1a7fb"/><rect x="1186" y="722" width="18" height="18" fill="#b0b6fc"/><rect x="1204" y="722" width="18" height="18" fill="#c5cdfd"/><rect x="1348" y="722" width="18" height="18" fill="#b7bbfc"/><rect x="1366" y="722" width="18" height="18" fill="#9a9efb"/><rect x="1384" y="722" width="18" height="18" fill="#8084fb"/><rect x="1402" y="722" width="18" height="18" fill="#9094fb"/><rect x="1420" y="722" width="18" height="18" fill="#8a8efb"/><rect x="1438" y="722" width="18" height="18" fill="#979bfb"/><rect x="1456" y="722" width="18" height="18" fill="#a0a4fb"/><rect x="1474" y="722" width="18" height="18" fill="#c1c7fd"/><rect x="1492" y="722" width="18" height="18" fill="#b1b6fc"/><rect x="1510" y="722" width="18" height="18" fill="#9196fb"/><rect x="1528" y="722" width="18" height="18" fill="#a3a8fb"/><rect x="1546" y="722" width="18" height="18" fill="#c2c9fd"/><rect x="2518" y="740" width="18" height="18" fill="#f0f0f2"/><rect x="2536" y="740" width="18" height="18" fill="#efefef"/><rect x="844" y="740" width="72" height="18" fill="#eef2fe"/><rect x="916" y="740" width="36" height="18" fill="#d5d9fd"/><rect x="952" y="740" width="18" height="18" fill="#e0e3fd"/><rect x="970" y="740" width="36" height="18" fill="#dde0fd"/><rect x="1006" y="740" width="18" height="18" fill="#cdd2fd"/><rect x="1024" y="740" width="18" height="18" fill="#d3d7fd"/><rect x="1042" y="740" width="18" height="18" fill="#e4e6fd"/><rect x="1060" y="740" width="18" height="18" fill="#e2e5fd"/><rect x="1078" y="740" width="36" height="18" fill="#eff3fe"/><rect x="1114" y="740" width="108" height="18" fill="#eff2fe"/><rect x="1348" y="740" width="18" height="18" fill="#e0e3fd"/><rect x="1366" y="740" width="18" height="18" fill="#d9defd"/><rect x="1384" y="740" width="36" height="18" fill="#d4d8fd"/><rect x="1420" y="740" width="18" height="18" fill="#d2d5fd"/><rect x="1438" y="740" width="18" height="18" fill="#eaeefe"/><rect x="1456" y="740" width="18" height="18" fill="#e1e4fd"/><rect x="1474" y="740" width="162" height="18" fill="#eaeffe"/><rect x="844" y="758" width="18" height="18" fill="#e9e7fd"/><rect x="862" y="758" width="18" height="18" fill="#e4e2fd"/><rect x="880" y="758" width="18" height="18" fill="#d7d8fd"/><rect x="898" y="758" width="18" height="18" fill="#ffffff"/><rect x="916" y="758" width="54" height="18" fill="#aaaefc"/><rect x="970" y="758" width="18" height="18" fill="#a1a5fb"/><rect x="988" y="758" width="18" height="18" fill="#9599fb"/><rect x="1006" y="758" width="18" height="18" fill="#c0c2fc"/><rect x="1024" y="758" width="18" height="18" fill="#d2d3fd"/><rect x="1042" y="758" width="18" height="18" fill="#b9bbfc"/><rect x="1060" y="758" width="18" height="18" fill="#9a9efb"/><rect x="1078" y="758" width="18" height="18" fill="#eceefe"/><rect x="1114" y="758" width="18" height="18" fill="#d2d2fd"/><rect x="1132" y="758" width="18" height="18" fill="#cbcbfd"/><rect x="1150" y="758" width="18" height="18" fill="#d0d1fd"/><rect x="1168" y="758" width="18" height="18" fill="#c8c8fd"/><rect x="1186" y="758" width="18" height="18" fill="#d5d6fd"/><rect x="1204" y="758" width="18" height="18" fill="#e7e8fd"/><rect x="1348" y="758" width="18" height="18" fill="#cdcdfd"/><rect x="1366" y="758" width="18" height="18" fill="#a7a9fb"/><rect x="1384" y="758" width="18" height="18" fill="#adaffc"/><rect x="1402" y="758" width="18" height="18" fill="#9ea1fb"/><rect x="1420" y="758" width="18" height="18" fill="#a8acfb"/><rect x="1438" y="758" width="18" height="18" fill="#b5b7fc"/><rect x="1456" y="758" width="18" height="18" fill="#bcbdfc"/><rect x="1474" y="758" width="18" height="18" fill="#a2a5fb"/><rect x="1492" y="758" width="18" height="18" fill="#cccdfd"/><rect x="1510" y="758" width="18" height="18" fill="#bbbcfc"/><rect x="1528" y="758" width="18" height="18" fill="#b9bafc"/><rect x="1546" y="758" width="18" height="18" fill="#b2b3fc"/><rect x="1564" y="758" width="36" height="18" fill="#c5c6fd"/><rect x="1600" y="758" width="36" height="18" fill="#b3b4fc"/><rect x="1636" y="758" width="18" height="18" fill="#c2c2fd"/><rect x="1654" y="758" width="18" height="18" fill="#bdbbfc"/><rect x="2356" y="758" width="18" height="18" fill="#e4e0fd"/><rect x="2374" y="758" width="18" height="18" fill="#c8c8fd"/><rect x="2392" y="758" width="18" height="18" fill="#c0c0fc"/><rect x="2410" y="758" width="18" height="18" fill="#d0d0fd"/><rect x="2428" y="758" width="18" height="18" fill="#c4c4fd"/><rect x="2446" y="758" width="18" height="18" fill="#d4d4fd"/><rect x="2464" y="758" width="18" height="18" fill="#ebe9fe"/><rect x="2518" y="758" width="18" height="18" fill="#eeeeee"/><rect x="2536" y="758" width="18" height="18" fill="#aaaaaa"/><rect x="844" y="776" width="18" height="18" fill="#e1e1ea"/><rect x="862" y="776" width="18" height="18" fill="#dedde9"/><rect x="880" y="776" width="18" height="18" fill="#e0e1e9"/><rect x="898" y="776" width="18" height="18" fill="#ececec"/><rect x="916" y="776" width="18" height="18" fill="#b9b9e8"/><rect x="934" y="776" width="18" height="18" fill="#c5c5e9"/><rect x="952" y="776" width="18" height="18" fill="#c6c6e9"/><rect x="970" y="776" width="18" height="18" fill="#c1c0e8"/><rect x="988" y="776" width="18" height="18" fill="#b5b5e8"/><rect x="1006" y="776" width="18" height="18" fill="#d7d7ea"/><rect x="1024" y="776" width="18" height="18" fill="#e5e5ec"/><rect x="1042" y="776" width="18" height="18" fill="#c5c4e9"/><rect x="1060" y="776" width="18" height="18" fill="#c0bfe8"/><rect x="1078" y="776" width="18" height="18" fill="#dcdce9"/><rect x="1096" y="776" width="18" height="18" fill="#e8e8ea"/><rect x="1114" y="776" width="108" height="18" fill="#dcdce8"/><rect x="1348" y="776" width="18" height="18" fill="#d3d3f0"/><rect x="1366" y="776" width="18" height="18" fill="#b9b9e6"/><rect x="1384" y="776" width="18" height="18" fill="#cbcbe9"/><rect x="1402" y="776" width="36" height="18" fill="#cccbf0"/><rect x="1438" y="776" width="18" height="18" fill="#d8d8f2"/><rect x="1456" y="776" width="18" height="18" fill="#e9e9f0"/><rect x="1474" y="776" width="18" height="18" fill="#d5d4f1"/><rect x="1492" y="776" width="18" height="18" fill="#e9e9f0"/><rect x="1510" y="776" width="18" height="18" fill="#e3e3f3"/><rect x="1528" y="776" width="72" height="18" fill="#dbdbf3"/><rect x="1600" y="776" width="18" height="18" fill="#e3e3f0"/><rect x="1618" y="776" width="18" height="18" fill="#dcdcf2"/><rect x="1636" y="776" width="18" height="18" fill="#d6d6f1"/><rect x="1654" y="776" width="18" height="18" fill="#dcdcf0"/><rect x="2356" y="776" width="126" height="18" fill="#e4e4f0"/><rect x="844" y="794" width="18" height="18" fill="#a8a8a8"/></g><g clip-path="url(#cl)"><rect x="1312" y="982" width="108" height="12" fill="#efeff5"/><rect x="1546" y="982" width="198" height="12" fill="#ededf4"/><rect x="2320" y="982" width="144" height="12" fill="#ededf4"/><rect x="1312" y="994" width="18" height="18" fill="#d2cffd"/><rect x="1330" y="994" width="18" height="18" fill="#a9b0fc"/><rect x="1348" y="994" width="18" height="18" fill="#c5c4fd"/><rect x="1366" y="994" width="18" height="18" fill="#aab1fc"/><rect x="1384" y="994" width="18" height="18" fill="#c8c8fd"/><rect x="1402" y="994" width="18" height="18" fill="#d6d6fd"/><rect x="1546" y="994" width="18" height="18" fill="#d2d2fd"/><rect x="1564" y="994" width="18" height="18" fill="#9a9efb"/><rect x="1582" y="994" width="18" height="18" fill="#a8acfb"/><rect x="1600" y="994" width="18" height="18" fill="#aaaffc"/><rect x="1618" y="994" width="18" height="18" fill="#b4b8fc"/><rect x="1636" y="994" width="18" height="18" fill="#a4a9fb"/><rect x="1654" y="994" width="18" height="18" fill="#8588fb"/><rect x="1672" y="994" width="18" height="18" fill="#aeacfc"/><rect x="1690" y="994" width="18" height="18" fill="#b7b7fc"/><rect x="1708" y="994" width="18" height="18" fill="#c0c4fd"/><rect x="1726" y="994" width="18" height="18" fill="#d7d9fd"/><rect x="1924" y="994" width="18" height="18" fill="#dcdafd"/><rect x="2320" y="994" width="18" height="18" fill="#c2c0fd"/><rect x="2338" y="994" width="18" height="18" fill="#b8b9fc"/><rect x="2356" y="994" width="18" height="18" fill="#d0d0fd"/><rect x="2374" y="994" width="18" height="18" fill="#c4c0fd"/><rect x="2392" y="994" width="18" height="18" fill="#aaacfb"/><rect x="2410" y="994" width="18" height="18" fill="#bfbffc"/><rect x="2428" y="994" width="18" height="18" fill="#bbbcfc"/><rect x="2446" y="994" width="18" height="18" fill="#ebedfd"/><rect x="1312" y="1012" width="108" height="18" fill="#f4f7fe"/><rect x="1546" y="1012" width="36" height="18" fill="#eef1fe"/><rect x="1582" y="1012" width="18" height="18" fill="#d9dcfd"/><rect x="1600" y="1012" width="18" height="18" fill="#e5e8fd"/><rect x="1618" y="1012" width="36" height="18" fill="#eef1fe"/><rect x="1654" y="1012" width="18" height="18" fill="#dfe2fd"/><rect x="1672" y="1012" width="72" height="18" fill="#f4f7fe"/><rect x="1924" y="1012" width="18" height="18" fill="#f3f6fe"/><rect x="2320" y="1012" width="18" height="18" fill="#d9ddfd"/><rect x="2338" y="1012" width="18" height="18" fill="#e4e8fd"/><rect x="2356" y="1012" width="18" height="18" fill="#eef1fe"/><rect x="2374" y="1012" width="18" height="18" fill="#f0f2fe"/><rect x="2392" y="1012" width="72" height="18" fill="#f5f7fe"/><rect x="1312" y="1030" width="18" height="18" fill="#c4c8fd"/><rect x="1330" y="1030" width="18" height="18" fill="#9fadfb"/><rect x="1348" y="1030" width="18" height="18" fill="#b2b7fc"/><rect x="1366" y="1030" width="18" height="18" fill="#a4b0fc"/><rect x="1384" y="1030" width="18" height="18" fill="#bbc0fc"/><rect x="1402" y="1030" width="18" height="18" fill="#bcc5fd"/><rect x="1546" y="1030" width="18" height="18" fill="#c3c8fd"/><rect x="1564" y="1030" width="18" height="18" fill="#939afb"/><rect x="1582" y="1030" width="18" height="18" fill="#858cfb"/><rect x="1600" y="1030" width="18" height="18" fill="#9aa1fb"/><rect x="1618" y="1030" width="18" height="18" fill="#a2a8fb"/><rect x="1636" y="1030" width="18" height="18" fill="#959bfb"/><rect x="1654" y="1030" width="18" height="18" fill="#8489fb"/><rect x="1672" y="1030" width="18" height="18" fill="#a7adfb"/><rect x="1690" y="1030" width="18" height="18" fill="#abb1fc"/><rect x="1708" y="1030" width="18" height="18" fill="#b6bffc"/><rect x="1726" y="1030" width="18" height="18" fill="#c7d2fd"/><rect x="1924" y="1030" width="18" height="18" fill="#d0d9fd"/><rect x="2320" y="1030" width="18" height="18" fill="#a2abfb"/><rect x="2338" y="1030" width="18" height="18" fill="#a8b0fc"/><rect x="2356" y="1030" width="18" height="18" fill="#b2bafc"/><rect x="2374" y="1030" width="18" height="18" fill="#b5bbfc"/><rect x="2392" y="1030" width="18" height="18" fill="#a0a9fb"/><rect x="2410" y="1030" width="18" height="18" fill="#b5bdfc"/><rect x="2428" y="1030" width="18" height="18" fill="#aeb5fc"/><rect x="2446" y="1030" width="18" height="18" fill="#dde6fd"/><rect x="1312" y="1048" width="108" height="18" fill="#dde5fd"/><rect x="1546" y="1048" width="18" height="18" fill="#e1e6fd"/><rect x="1564" y="1048" width="18" height="18" fill="#c1c7fd"/><rect x="1582" y="1048" width="18" height="18" fill="#c7cdfd"/><rect x="1600" y="1048" width="18" height="18" fill="#ccd2fd"/><rect x="1618" y="1048" width="36" height="18" fill="#d2d8fd"/><rect x="1654" y="1048" width="18" height="18" fill="#c0c5fd"/><rect x="1672" y="1048" width="18" height="18" fill="#d4dafd"/><rect x="1690" y="1048" width="18" height="18" fill="#d8defd"/><rect x="1708" y="1048" width="18" height="18" fill="#dde3fd"/><rect x="1726" y="1048" width="18" height="18" fill="#e1e7fd"/><rect x="1924" y="1048" width="18" height="18" fill="#e0e6fd"/><rect x="2320" y="1048" width="18" height="18" fill="#cad3fd"/><rect x="2338" y="1048" width="18" height="18" fill="#cdd5fd"/><rect x="2356" y="1048" width="18" height="18" fill="#d9dffd"/><rect x="2374" y="1048" width="18" height="18" fill="#dde3fd"/><rect x="2392" y="1048" width="36" height="18" fill="#dee4fd"/><rect x="2428" y="1048" width="18" height="18" fill="#dde3fd"/><rect x="2446" y="1048" width="18" height="18" fill="#e4e9fd"/><rect x="1312" y="1066" width="18" height="18" fill="#e6e4fd"/><rect x="1330" y="1066" width="18" height="18" fill="#c9c9fd"/><rect x="1348" y="1066" width="18" height="18" fill="#d4d2fd"/><rect x="1366" y="1066" width="18" height="18" fill="#c8cbfd"/><rect x="1384" y="1066" width="18" height="18" fill="#dcdafd"/><rect x="1402" y="1066" width="18" height="18" fill="#d4d4fd"/><rect x="1546" y="1066" width="18" height="18" fill="#dddcfd"/><rect x="1564" y="1066" width="18" height="18" fill="#bbbcfc"/><rect x="1582" y="1066" width="18" height="18" fill="#999efb"/><rect x="1600" y="1066" width="36" height="18" fill="#bcbdfc"/><rect x="1636" y="1066" width="18" height="18" fill="#b2b5fc"/><rect x="1654" y="1066" width="18" height="18" fill="#adb1fc"/><rect x="1672" y="1066" width="18" height="18" fill="#c7c8fd"/><rect x="1690" y="1066" width="18" height="18" fill="#d2d0fd"/><rect x="1708" y="1066" width="18" height="18" fill="#dcdcfd"/><rect x="1726" y="1066" width="18" height="18" fill="#e3e3fd"/><rect x="1924" y="1066" width="18" height="18" fill="#e7e6fd"/><rect x="2320" y="1066" width="18" height="18" fill="#c5c2fd"/><rect x="2338" y="1066" width="18" height="18" fill="#cecdfd"/><rect x="2356" y="1066" width="18" height="18" fill="#d4d3fd"/><rect x="2374" y="1066" width="18" height="18" fill="#dbd7fd"/><rect x="2392" y="1066" width="18" height="18" fill="#c4c5fd"/><rect x="2410" y="1066" width="18" height="18" fill="#d8d7fd"/><rect x="2428" y="1066" width="18" height="18" fill="#d0cffd"/><rect x="2446" y="1066" width="18" height="18" fill="#f7f8fe"/><rect x="1312" y="1084" width="18" height="18" fill="#eae9fd"/><rect x="1330" y="1084" width="18" height="18" fill="#dadafd"/><rect x="1348" y="1084" width="18" height="18" fill="#e6e6fd"/><rect x="1366" y="1084" width="18" height="18" fill="#dddcfd"/><rect x="1384" y="1084" width="18" height="18" fill="#e5e5fd"/><rect x="1402" y="1084" width="18" height="18" fill="#e7e7fd"/><rect x="1546" y="1084" width="18" height="18" fill="#e8e8fd"/><rect x="1564" y="1084" width="18" height="18" fill="#c5c5fd"/><rect x="1582" y="1084" width="18" height="18" fill="#bdbdfc"/><rect x="1600" y="1084" width="18" height="18" fill="#cccdfd"/><rect x="1618" y="1084" width="18" height="18" fill="#dfdffd"/><rect x="1636" y="1084" width="18" height="18" fill="#dddefd"/><rect x="1654" y="1084" width="18" height="18" fill="#b4b5fc"/><rect x="1672" y="1084" width="18" height="18" fill="#dadafd"/><rect x="1690" y="1084" width="18" height="18" fill="#dedffd"/><rect x="1708" y="1084" width="18" height="18" fill="#e1e2fd"/><rect x="1726" y="1084" width="18" height="18" fill="#ebebfd"/><rect x="1924" y="1084" width="18" height="18" fill="#ededfe"/><rect x="2320" y="1084" width="18" height="18" fill="#cbc8fd"/><rect x="2338" y="1084" width="18" height="18" fill="#cdcafd"/><rect x="2356" y="1084" width="18" height="18" fill="#e5e4fd"/><rect x="2374" y="1084" width="18" height="18" fill="#e1e0fd"/><rect x="2392" y="1084" width="18" height="18" fill="#e0e0fd"/><rect x="2410" y="1084" width="36" height="18" fill="#e2e2fd"/><rect x="2446" y="1084" width="18" height="18" fill="#f1f2fe"/><rect x="1312" y="1102" width="18" height="18" fill="#d8dcfd"/><rect x="1330" y="1102" width="18" height="18" fill="#c5cafd"/><rect x="1348" y="1102" width="18" height="18" fill="#cbd0fd"/><rect x="1366" y="1102" width="18" height="18" fill="#c5cbfd"/><rect x="1384" y="1102" width="18" height="18" fill="#d2d8fd"/><rect x="1402" y="1102" width="18" height="18" fill="#d7dcfd"/><rect x="1546" y="1102" width="18" height="18" fill="#d8dcfd"/><rect x="1564" y="1102" width="18" height="18" fill="#c6cbfd"/><rect x="1582" y="1102" width="18" height="18" fill="#b2b6fc"/><rect x="1600" y="1102" width="36" height="18" fill="#bfc4fd"/><rect x="1636" y="1102" width="18" height="18" fill="#c2c7fd"/><rect x="1654" y="1102" width="18" height="18" fill="#bfc4fd"/><rect x="1672" y="1102" width="18" height="18" fill="#bec3fd"/><rect x="1690" y="1102" width="18" height="18" fill="#c6cbfd"/><rect x="1708" y="1102" width="18" height="18" fill="#cdd1fd"/><rect x="1726" y="1102" width="18" height="18" fill="#cfd4fd"/><rect x="1744" y="1102" width="18" height="18" fill="#d8ddfd"/><rect x="1924" y="1102" width="18" height="18" fill="#dce3fd"/><rect x="2320" y="1102" width="18" height="18" fill="#c7cffd"/><rect x="2338" y="1102" width="18" height="18" fill="#cbd3fd"/><rect x="2356" y="1102" width="18" height="18" fill="#c6cefd"/><rect x="2374" y="1102" width="18" height="18" fill="#d2d9fd"/><rect x="2392" y="1102" width="18" height="18" fill="#c7cffd"/><rect x="2410" y="1102" width="18" height="18" fill="#d0d8fd"/><rect x="2428" y="1102" width="18" height="18" fill="#c4cbfd"/><rect x="2446" y="1102" width="18" height="18" fill="#e3e9fd"/><rect x="1312" y="1120" width="18" height="18" fill="#cfd0fd"/><rect x="1330" y="1120" width="18" height="18" fill="#b0b9fc"/><rect x="1348" y="1120" width="18" height="18" fill="#c1c7fd"/><rect x="1366" y="1120" width="18" height="18" fill="#b3bcfc"/><rect x="1384" y="1120" width="18" height="18" fill="#c8cefd"/><rect x="1402" y="1120" width="18" height="18" fill="#e4e8fd"/><rect x="1546" y="1120" width="18" height="18" fill="#cdd2fd"/><rect x="1564" y="1120" width="18" height="18" fill="#9ca1fb"/><rect x="1582" y="1120" width="18" height="18" fill="#8185fb"/><rect x="1600" y="1120" width="18" height="18" fill="#979cfb"/><rect x="1618" y="1120" width="18" height="18" fill="#989dfb"/><rect x="1636" y="1120" width="18" height="18" fill="#a3a8fb"/><rect x="1654" y="1120" width="18" height="18" fill="#8d92fb"/><rect x="1672" y="1120" width="18" height="18" fill="#979cfb"/><rect x="1690" y="1120" width="18" height="18" fill="#a5aafb"/><rect x="1708" y="1120" width="18" height="18" fill="#b8bdfc"/><rect x="1726" y="1120" width="18" height="18" fill="#c5c9fd"/><rect x="1744" y="1120" width="18" height="18" fill="#c9cefd"/><rect x="1924" y="1120" width="18" height="18" fill="#d2dafd"/><rect x="2320" y="1120" width="18" height="18" fill="#a4abfb"/><rect x="2338" y="1120" width="18" height="18" fill="#a6acfb"/><rect x="2356" y="1120" width="18" height="18" fill="#bdc3fd"/><rect x="2374" y="1120" width="18" height="18" fill="#bfc4fd"/><rect x="2392" y="1120" width="18" height="18" fill="#b0b8fc"/><rect x="2410" y="1120" width="18" height="18" fill="#c3c9fd"/><rect x="2428" y="1120" width="18" height="18" fill="#c0c6fd"/><rect x="2446" y="1120" width="18" height="18" fill="#dae0fd"/><rect x="1312" y="1138" width="108" height="18" fill="#efeffe"/><rect x="1546" y="1138" width="18" height="18" fill="#f2f2fe"/><rect x="1564" y="1138" width="108" height="18" fill="#e2e3fd"/><rect x="1672" y="1138" width="18" height="18" fill="#efeffe"/><rect x="1690" y="1138" width="18" height="18" fill="#e3e4fd"/><rect x="1708" y="1138" width="18" height="18" fill="#ecedfe"/><rect x="1726" y="1138" width="18" height="18" fill="#e9eafd"/><rect x="1744" y="1138" width="18" height="18" fill="#f0f0fe"/><rect x="1924" y="1138" width="18" height="18" fill="#f3f4fe"/><rect x="2320" y="1138" width="18" height="18" fill="#e1e2fd"/><rect x="2338" y="1138" width="18" height="18" fill="#e6e7fd"/><rect x="2356" y="1138" width="18" height="18" fill="#e0e2fd"/><rect x="2374" y="1138" width="18" height="18" fill="#ececfe"/><rect x="2392" y="1138" width="18" height="18" fill="#e9ebfd"/><rect x="2410" y="1138" width="18" height="18" fill="#ebedfe"/><rect x="2428" y="1138" width="18" height="18" fill="#ecedfe"/><rect x="2446" y="1138" width="18" height="18" fill="#f7f8fe"/><rect x="1312" y="1156" width="18" height="18" fill="#dbd8fd"/><rect x="1330" y="1156" width="18" height="18" fill="#b4bbfc"/><rect x="1348" y="1156" width="18" height="18" fill="#cac8fd"/><rect x="1366" y="1156" width="18" height="18" fill="#b4b9fc"/><rect x="1384" y="1156" width="36" height="18" fill="#cfcffd"/><rect x="1546" y="1156" width="18" height="18" fill="#c5c5fd"/><rect x="1564" y="1156" width="18" height="18" fill="#9a9dfb"/><rect x="1582" y="1156" width="18" height="18" fill="#c5c5fd"/><rect x="1600" y="1156" width="18" height="18" fill="#aaaefc"/><rect x="1618" y="1156" width="18" height="18" fill="#a8acfb"/><rect x="1636" y="1156" width="18" height="18" fill="#b2b5fc"/><rect x="1654" y="1156" width="18" height="18" fill="#b4b6fc"/><rect x="1672" y="1156" width="18" height="18" fill="#a6a9fb"/><rect x="1690" y="1156" width="18" height="18" fill="#a9abfb"/><rect x="1708" y="1156" width="18" height="18" fill="#b8bafc"/><rect x="1726" y="1156" width="18" height="18" fill="#c4c2fd"/><rect x="1744" y="1156" width="18" height="18" fill="#d3d2fd"/><rect x="1924" y="1156" width="18" height="18" fill="#e1ddfd"/><rect x="2320" y="1156" width="18" height="18" fill="#adb0fc"/><rect x="2338" y="1156" width="18" height="18" fill="#b4b5fc"/><rect x="2356" y="1156" width="18" height="18" fill="#d4d5fd"/><rect x="2374" y="1156" width="18" height="18" fill="#c8c6fd"/><rect x="2392" y="1156" width="18" height="18" fill="#abaefc"/><rect x="2410" y="1156" width="36" height="18" fill="#c6c8fd"/><rect x="2446" y="1156" width="18" height="18" fill="#eeeffe"/><rect x="1312" y="1174" width="108" height="18" fill="#f1f5fe"/><rect x="1546" y="1174" width="216" height="18" fill="#f1f5fe"/><rect x="1924" y="1174" width="18" height="18" fill="#f1f5fe"/><rect x="2320" y="1174" width="18" height="18" fill="#e7edfe"/><rect x="2338" y="1174" width="18" height="18" fill="#eaf0fe"/><rect x="2356" y="1174" width="18" height="18" fill="#ecf1fe"/><rect x="2374" y="1174" width="90" height="18" fill="#f0f5fe"/><rect x="1312" y="1192" width="18" height="18" fill="#b9bcfc"/><rect x="1330" y="1192" width="18" height="18" fill="#969ffb"/><rect x="1348" y="1192" width="18" height="18" fill="#a5acfb"/><rect x="1366" y="1192" width="18" height="18" fill="#9aa6fb"/><rect x="1384" y="1192" width="18" height="18" fill="#b4b9fc"/><rect x="1402" y="1192" width="18" height="18" fill="#abb6fc"/><rect x="1546" y="1192" width="18" height="18" fill="#b9befc"/><rect x="1564" y="1192" width="18" height="18" fill="#878dfb"/><rect x="1582" y="1192" width="18" height="18" fill="#8d93fb"/><rect x="1600" y="1192" width="18" height="18" fill="#99a0fb"/><rect x="1618" y="1192" width="18" height="18" fill="#8f95fb"/><rect x="1636" y="1192" width="18" height="18" fill="#8d93fb"/><rect x="1654" y="1192" width="18" height="18" fill="#7a80fa"/><rect x="1672" y="1192" width="18" height="18" fill="#9aa0fb"/><rect x="1690" y="1192" width="18" height="18" fill="#a5abfb"/><rect x="1708" y="1192" width="18" height="18" fill="#adb5fc"/><rect x="1726" y="1192" width="18" height="18" fill="#c4ccfd"/><rect x="1744" y="1192" width="18" height="18" fill="#e4ecfd"/><rect x="1924" y="1192" width="18" height="18" fill="#c8cefd"/><rect x="2320" y="1192" width="36" height="18" fill="#a2abfb"/><rect x="2356" y="1192" width="18" height="18" fill="#b0b8fc"/><rect x="2374" y="1192" width="18" height="18" fill="#b3b9fc"/><rect x="2392" y="1192" width="18" height="18" fill="#9aa3fb"/><rect x="2410" y="1192" width="18" height="18" fill="#adb4fc"/><rect x="2428" y="1192" width="18" height="18" fill="#a8b0fc"/><rect x="2446" y="1192" width="18" height="18" fill="#d8e2fd"/><rect x="1312" y="1210" width="108" height="18" fill="#edf1fe"/><rect x="1546" y="1210" width="18" height="18" fill="#ebeefe"/><rect x="1564" y="1210" width="18" height="18" fill="#e1e4fd"/><rect x="1582" y="1210" width="18" height="18" fill="#dadefd"/><rect x="1600" y="1210" width="18" height="18" fill="#d6dafd"/><rect x="1618" y="1210" width="18" height="18" fill="#e1e4fd"/><rect x="1636" y="1210" width="18" height="18" fill="#d6dafd"/><rect x="1654" y="1210" width="18" height="18" fill="#d0d5fd"/><rect x="1672" y="1210" width="18" height="18" fill="#e8ebfd"/><rect x="1690" y="1210" width="72" height="18" fill="#edf1fe"/><rect x="1924" y="1210" width="18" height="18" fill="#eaeffe"/><rect x="2320" y="1210" width="18" height="18" fill="#ccd3fd"/><rect x="2338" y="1210" width="18" height="18" fill="#d6dcfd"/><rect x="2356" y="1210" width="36" height="18" fill="#e2e6fd"/><rect x="2392" y="1210" width="72" height="18" fill="#eaeefe"/><rect x="1312" y="1228" width="18" height="18" fill="#e4e1fd"/><rect x="1330" y="1228" width="18" height="18" fill="#b4b9fc"/><rect x="1348" y="1228" width="18" height="18" fill="#cdcbfd"/><rect x="1366" y="1228" width="18" height="18" fill="#bcc0fc"/><rect x="1384" y="1228" width="18" height="18" fill="#e4e1fd"/><rect x="1402" y="1228" width="18" height="18" fill="#d8d9fd"/><rect x="1546" y="1228" width="18" height="18" fill="#cccdfd"/><rect x="1564" y="1228" width="18" height="18" fill="#b6b7fc"/><rect x="1582" y="1228" width="36" height="18" fill="#a7a9fb"/><rect x="1618" y="1228" width="18" height="18" fill="#c0c1fd"/><rect x="1636" y="1228" width="18" height="18" fill="#aeb1fc"/><rect x="1654" y="1228" width="18" height="18" fill="#9a9efb"/><rect x="1672" y="1228" width="18" height="18" fill="#c0c1fd"/><rect x="1690" y="1228" width="18" height="18" fill="#cbcbfd"/><rect x="1708" y="1228" width="18" height="18" fill="#d4d6fd"/><rect x="1726" y="1228" width="18" height="18" fill="#e3e3fd"/><rect x="1924" y="1228" width="18" height="18" fill="#e7e7fd"/><rect x="2320" y="1228" width="18" height="18" fill="#adb0fc"/><rect x="2338" y="1228" width="18" height="18" fill="#c0c0fc"/><rect x="2356" y="1228" width="18" height="18" fill="#c8c9fd"/><rect x="2374" y="1228" width="18" height="18" fill="#d2d0fd"/><rect x="2392" y="1228" width="18" height="18" fill="#b9bafc"/><rect x="2410" y="1228" width="18" height="18" fill="#cfcdfd"/><rect x="2428" y="1228" width="18" height="18" fill="#cdcbfd"/><rect x="2446" y="1228" width="18" height="18" fill="#fafbff"/><rect x="2482" y="1228" width="18" height="18" fill="#c0c0fc"/><rect x="2500" y="1228" width="18" height="18" fill="#bcbcfc"/><rect x="2518" y="1228" width="18" height="18" fill="#dad8fd"/><rect x="2536" y="1228" width="18" height="18" fill="#c8c6fd"/><rect x="1312" y="1246" width="18" height="18" fill="#ebebfd"/><rect x="1330" y="1246" width="18" height="18" fill="#e2e2fd"/><rect x="1348" y="1246" width="18" height="18" fill="#e9e9fd"/><rect x="1366" y="1246" width="18" height="18" fill="#e3e3fd"/><rect x="1384" y="1246" width="18" height="18" fill="#ebebfd"/><rect x="1402" y="1246" width="18" height="18" fill="#eeeefe"/><rect x="1546" y="1246" width="18" height="18" fill="#e6e6fd"/><rect x="1564" y="1246" width="90" height="18" fill="#dddefd"/><rect x="1654" y="1246" width="18" height="18" fill="#c3c3fd"/><rect x="1672" y="1246" width="18" height="18" fill="#dcdcfd"/><rect x="1690" y="1246" width="18" height="18" fill="#e5e5fd"/><rect x="1708" y="1246" width="18" height="18" fill="#e9e9fd"/><rect x="1726" y="1246" width="18" height="18" fill="#efeffe"/><rect x="1924" y="1246" width="18" height="18" fill="#f0f0fe"/><rect x="2320" y="1246" width="18" height="18" fill="#d3d4fd"/><rect x="2338" y="1246" width="18" height="18" fill="#cdcbfd"/><rect x="2356" y="1246" width="54" height="18" fill="#e5e5fd"/><rect x="2410" y="1246" width="36" height="18" fill="#e6e6fd"/><rect x="2446" y="1246" width="18" height="18" fill="#f4f5fe"/><rect x="2482" y="1246" width="18" height="18" fill="#d6d6fd"/><rect x="2500" y="1246" width="18" height="18" fill="#c8c7fd"/><rect x="2518" y="1246" width="18" height="18" fill="#ebebfe"/><rect x="2536" y="1246" width="18" height="18" fill="#e4e2fd"/><rect x="1312" y="1264" width="18" height="18" fill="#d2d5fd"/><rect x="1330" y="1264" width="18" height="18" fill="#b8befc"/><rect x="1348" y="1264" width="18" height="18" fill="#c3c7fd"/><rect x="1366" y="1264" width="18" height="18" fill="#bcc2fc"/><rect x="1384" y="1264" width="36" height="18" fill="#d6dcfd"/><rect x="1546" y="1264" width="18" height="18" fill="#cfd3fd"/><rect x="1564" y="1264" width="18" height="18" fill="#bcc1fc"/><rect x="1582" y="1264" width="18" height="18" fill="#a0a5fb"/><rect x="1600" y="1264" width="18" height="18" fill="#b9befc"/><rect x="1618" y="1264" width="18" height="18" fill="#bfc4fd"/><rect x="1636" y="1264" width="18" height="18" fill="#c3c8fd"/><rect x="1654" y="1264" width="18" height="18" fill="#a4a9fb"/><rect x="1672" y="1264" width="18" height="18" fill="#bdc1fc"/><rect x="1690" y="1264" width="18" height="18" fill="#c6cbfd"/><rect x="1708" y="1264" width="18" height="18" fill="#cdd2fd"/><rect x="1726" y="1264" width="18" height="18" fill="#d4d9fd"/><rect x="1924" y="1264" width="18" height="18" fill="#d8e0fd"/><rect x="2320" y="1264" width="54" height="18" fill="#c3cbfd"/><rect x="2374" y="1264" width="18" height="18" fill="#cdd3fd"/><rect x="2392" y="1264" width="18" height="18" fill="#bdc5fd"/><rect x="2410" y="1264" width="18" height="18" fill="#c8d0fd"/><rect x="2428" y="1264" width="18" height="18" fill="#bcc4fc"/><rect x="2446" y="1264" width="18" height="18" fill="#e4ebfe"/><rect x="1312" y="1282" width="18" height="18" fill="#d3d6fd"/><rect x="1330" y="1282" width="18" height="18" fill="#b8befc"/><rect x="1348" y="1282" width="18" height="18" fill="#cbd0fd"/><rect x="1366" y="1282" width="18" height="18" fill="#bdc3fd"/><rect x="1384" y="1282" width="36" height="18" fill="#d4dcfd"/><rect x="1546" y="1282" width="18" height="18" fill="#cfd3fd"/><rect x="1564" y="1282" width="18" height="18" fill="#b3b8fc"/><rect x="1582" y="1282" width="18" height="18" fill="#9197fb"/><rect x="1600" y="1282" width="18" height="18" fill="#aeb3fc"/><rect x="1618" y="1282" width="18" height="18" fill="#bec3fd"/><rect x="1636" y="1282" width="18" height="18" fill="#c8cdfd"/><rect x="1654" y="1282" width="18" height="18" fill="#989dfb"/><rect x="1672" y="1282" width="18" height="18" fill="#bfc3fd"/><rect x="1690" y="1282" width="36" height="18" fill="#c8ccfd"/><rect x="1726" y="1282" width="18" height="18" fill="#d6dbfd"/><rect x="1924" y="1282" width="18" height="18" fill="#d6ddfd"/><rect x="2320" y="1282" width="18" height="18" fill="#a9b0fc"/><rect x="2338" y="1282" width="18" height="18" fill="#b2b8fc"/><rect x="2356" y="1282" width="36" height="18" fill="#c8cefd"/><rect x="2392" y="1282" width="18" height="18" fill="#bec5fd"/><rect x="2410" y="1282" width="36" height="18" fill="#c8cefd"/><rect x="2446" y="1282" width="18" height="18" fill="#dce3fd"/><rect x="1312" y="1300" width="18" height="18" fill="#eeeefe"/><rect x="1330" y="1300" width="18" height="18" fill="#e4e4fd"/><rect x="1348" y="1300" width="18" height="18" fill="#e8e8fd"/><rect x="1366" y="1300" width="18" height="18" fill="#e2e2fd"/><rect x="1384" y="1300" width="36" height="18" fill="#efeffe"/><rect x="1546" y="1300" width="18" height="18" fill="#efeffe"/><rect x="1564" y="1300" width="18" height="18" fill="#e6e6fd"/><rect x="1582" y="1300" width="18" height="18" fill="#d6d6fd"/><rect x="1600" y="1300" width="36" height="18" fill="#dedefd"/><rect x="1636" y="1300" width="18" height="18" fill="#dcdcfd"/><rect x="1654" y="1300" width="18" height="18" fill="#d4d4fd"/><rect x="1672" y="1300" width="18" height="18" fill="#dfdffd"/><rect x="1690" y="1300" width="18" height="18" fill="#e0e0fd"/><rect x="1708" y="1300" width="18" height="18" fill="#ebebfe"/><rect x="1726" y="1300" width="18" height="18" fill="#efeffe"/><rect x="1924" y="1300" width="18" height="18" fill="#f0f0fe"/><rect x="2320" y="1300" width="18" height="18" fill="#dcdcfd"/><rect x="2338" y="1300" width="18" height="18" fill="#e4e4fd"/><rect x="2356" y="1300" width="18" height="18" fill="#dedffd"/><rect x="2374" y="1300" width="18" height="18" fill="#e7e8fd"/><rect x="2392" y="1300" width="36" height="18" fill="#e4e5fd"/><rect x="2428" y="1300" width="18" height="18" fill="#e6e6fd"/><rect x="2446" y="1300" width="18" height="18" fill="#f7f8fe"/><rect x="1312" y="1318" width="18" height="18" fill="#e0dafd"/><rect x="1330" y="1318" width="18" height="18" fill="#c2c6fd"/><rect x="1348" y="1318" width="18" height="18" fill="#d3d0fd"/><rect x="1366" y="1318" width="18" height="18" fill="#c5c7fd"/><rect x="1384" y="1318" width="36" height="18" fill="#e3e2fd"/><rect x="1546" y="1318" width="18" height="18" fill="#dddefd"/><rect x="1564" y="1318" width="18" height="18" fill="#b4b6fc"/><rect x="1582" y="1318" width="18" height="18" fill="#adaefc"/><rect x="1600" y="1318" width="18" height="18" fill="#b0b1fc"/><rect x="1618" y="1318" width="18" height="18" fill="#cacbfd"/><rect x="1636" y="1318" width="18" height="18" fill="#c0c0fd"/><rect x="1654" y="1318" width="18" height="18" fill="#8c8ffb"/><rect x="1672" y="1318" width="18" height="18" fill="#bbbbfc"/><rect x="1690" y="1318" width="36" height="18" fill="#cbcbfd"/><rect x="1726" y="1318" width="18" height="18" fill="#e0e0fd"/><rect x="1924" y="1318" width="18" height="18" fill="#e2e0fd"/><rect x="2320" y="1318" width="18" height="18" fill="#afb1fc"/><rect x="2338" y="1318" width="18" height="18" fill="#b0b1fc"/><rect x="2356" y="1318" width="18" height="18" fill="#d0d0fd"/><rect x="2374" y="1318" width="18" height="18" fill="#ccc9fd"/><rect x="2392" y="1318" width="18" height="18" fill="#bcbdfc"/><rect x="2410" y="1318" width="18" height="18" fill="#cfcffd"/><rect x="2428" y="1318" width="18" height="18" fill="#cbcbfd"/><rect x="2446" y="1318" width="18" height="18" fill="#ededfe"/></g></svg>
</body></html>
